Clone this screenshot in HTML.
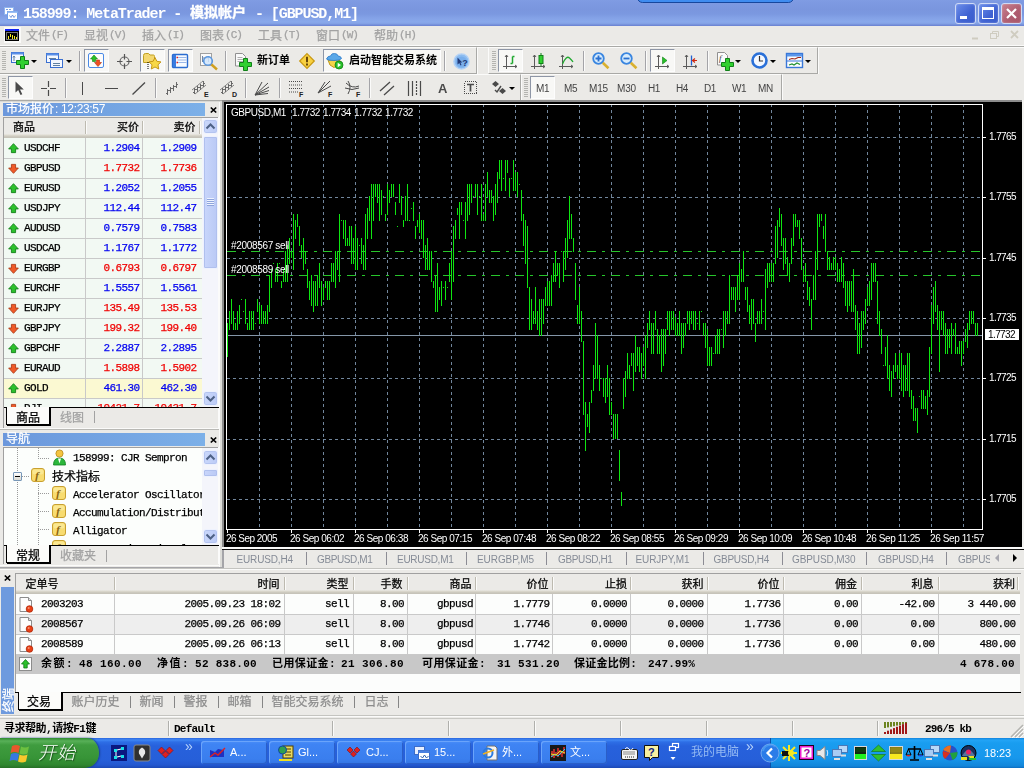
<!DOCTYPE html><html lang="zh"><head><meta charset="utf-8"><title>158999: MetaTrader</title><style>
*{margin:0;padding:0;box-sizing:border-box}
html,body{width:1024px;height:768px;overflow:hidden;background:#ebeae7}
body{position:relative;font-family:"Liberation Sans","Noto Sans CJK SC",sans-serif;font-size:12px;color:#000}
.a{position:absolute}
.t{position:absolute;white-space:pre;line-height:1;display:block;will-change:opacity}
.th{font-family:"Liberation Sans","Noto Sans CJK SC",sans-serif;font-size:10px}
.ss{font-family:"Liberation Mono","Noto Sans CJK SC",monospace;font-size:11px}
.sb{font-family:"Liberation Mono","Noto Sans CJK SC",monospace;font-size:11px;font-weight:bold}
.cj{font-family:"Liberation Sans","Noto Sans CJK SC",sans-serif;font-size:12px}
.ss,.cj{-webkit-text-stroke:.25px currentColor}
.w{color:#fff}
.g{color:#a2a2a2}
.bl{color:#0000f0}
.rd{color:#f00000}
svg{position:absolute;overflow:visible}
</style></head><body>
<div class="a" style="left:0px;top:0px;width:1024px;height:26px;background:linear-gradient(#809ce3 0,#7d99e1 3px,#7a96de 9px,#7b98e0 14px,#84a2e7 18px,#89a9eb 22px,#819fe3 24px,#7089d6 25px,#6c84d2 26px)"></div>
<div class="a" style="left:637px;top:-8px;width:157px;height:11px;background:#3f8cf0;border:1px solid #17479d;border-radius:6px"></div>
<svg style="left:4px;top:7px" width="15" height="13" viewBox="0 0 15 13"><rect x=".5" y=".5" width="9" height="7" fill="#fdfeff" stroke="#8fb4ee"/><path d="M2 2.500h2M5 2.500h2" stroke="#7aa0e0"/><rect x="3.500" y="4.500" width="10" height="8" fill="#fff" stroke="#6f9fe8"/><rect x="3.500" y="4.500" width="10" height="1.500" fill="#9cc0f4"/><path d="M5.500 8.500l1.500 2 1.500-2.500 1.500 2.500 1.500-2" fill="none" stroke="#5580d0" stroke-width=".8"/></svg>
<span id="t1" class="t w" style="left:23px;top:7px;letter-spacing:-1.097px;font:bold 15px/1 'Liberation Mono',monospace">158999: MetaTrader - </span>
<span id="t2" class="t w" style="left:190px;top:6px;letter-spacing:0.000px;font:bold 14px/1 'Liberation Mono','Noto Sans CJK SC',sans-serif;-webkit-text-stroke:.35px #fff">模拟帐户</span>
<span id="t3" class="t w" style="left:247px;top:7px;letter-spacing:-1.074px;font:bold 15px/1 'Liberation Mono',monospace"> - [GBPUSD,M1]</span>
<div class="a" style="left:955px;top:3px;width:21px;height:21px;background:linear-gradient(135deg,#6c8eea,#3f62d2 60%,#3a5ccc);border:1px solid #cfdaf6;border-radius:3px;box-shadow:inset 0 0 2px rgba(255,255,255,.4)"><div class="a" style="left:4px;top:12px;width:7px;height:3px;background:#fff"></div></div>
<div class="a" style="left:978px;top:3px;width:21px;height:21px;background:linear-gradient(135deg,#6c8eea,#3f62d2 60%,#3a5ccc);border:1px solid #cfdaf6;border-radius:3px;box-shadow:inset 0 0 2px rgba(255,255,255,.4)"><div class="a" style="left:3px;top:3px;width:12px;height:12px;border:1px solid #fff;border-top:3px solid #fff"></div></div>
<div class="a" style="left:1001px;top:3px;width:21px;height:21px;background:linear-gradient(135deg,#c8808e,#ae5c70 60%,#a8566a);border:1px solid #cfdaf6;border-radius:3px;box-shadow:inset 0 0 2px rgba(255,255,255,.4)"><svg style="left:3px;top:3px" width="13" height="13" viewBox="0 0 13 13"><path d="M2 2l9 9M11 2l-9 9" stroke="#fff" stroke-width="2.2" fill="none"/></svg></div>
<div class="a" style="left:4px;top:27px;width:17px;height:16px;background:#fafaf8"></div>
<svg style="left:5px;top:29px" width="14" height="12" viewBox="0 0 14 12" shape-rendering="crispEdges"><rect width="14" height="12" fill="#000"/><rect width="14" height="2" fill="#1020f0"/><rect x="1.500" y="3.500" width="11" height="7" fill="none" stroke="#777"/><path d="M3.500 7v3M5.500 5v3M7.500 6v3.500M9.500 7v3M11.500 8v2" stroke="#f4ec20" stroke-width="1"/></svg>
<span id="t4" class="t cj g" style="left:26px;top:30px;">文件</span>
<span id="t5" class="t ss g" style="left:51px;top:30px;letter-spacing:-0.938px;">(F)</span>
<span id="t6" class="t cj g" style="left:84px;top:30px;">显视</span>
<span id="t7" class="t ss g" style="left:109px;top:30px;letter-spacing:-0.938px;">(V)</span>
<span id="t8" class="t cj g" style="left:142px;top:30px;">插入</span>
<span id="t9" class="t ss g" style="left:167px;top:30px;letter-spacing:-0.938px;">(I)</span>
<span id="t10" class="t cj g" style="left:200px;top:30px;">图表</span>
<span id="t11" class="t ss g" style="left:225px;top:30px;letter-spacing:-0.938px;">(C)</span>
<span id="t12" class="t cj g" style="left:258px;top:30px;">工具</span>
<span id="t13" class="t ss g" style="left:283px;top:30px;letter-spacing:-0.938px;">(T)</span>
<span id="t14" class="t cj g" style="left:316px;top:30px;">窗口</span>
<span id="t15" class="t ss g" style="left:341px;top:30px;letter-spacing:-0.938px;">(W)</span>
<span id="t16" class="t cj g" style="left:374px;top:30px;">帮助</span>
<span id="t17" class="t ss g" style="left:399px;top:30px;letter-spacing:-0.938px;">(H)</span>
<svg style="left:968px;top:28px" width="54" height="14" viewBox="0 0 54 14"><g stroke="#cfccc0" fill="none"><path d="M4 10.5h6" stroke-width="2"/><rect x="22.5" y="5.500" width="6" height="5"/><path d="M24.5 5V3.500h6v5H29" /><path d="M43 3l7 7M50 3l-7 7" stroke-width="1.8"/></g></svg>
<div class="a" style="left:0px;top:45px;width:1024px;height:1px;background:#fbfbfa"></div>
<div class="a" style="left:0px;top:46px;width:1024px;height:1px;background:#a9a9a6"></div>
<div class="a" style="left:0px;top:47px;width:1024px;height:1px;background:#fbfbfa"></div>
<div class="a" style="left:-2px;top:47px;width:479px;height:27px;border:1px solid;border-color:#fbfbfa #a9a9a6 #a9a9a6 #fbfbfa"></div>
<div class="a" style="left:477px;top:47px;width:1px;height:27px;background:#fbfbfa"></div>
<div class="a" style="left:2px;top:51px;width:4px;height:19px;background:repeating-linear-gradient(#b4b4b0 0,#b4b4b0 1px,transparent 1px,transparent 2px)"></div>
<div class="a" style="left:488px;top:47px;width:330px;height:27px;border:1px solid;border-color:#fbfbfa #a9a9a6 #a9a9a6 #fbfbfa"></div>
<div class="a" style="left:818px;top:47px;width:1px;height:27px;background:#fbfbfa"></div>
<div class="a" style="left:492px;top:51px;width:4px;height:19px;background:repeating-linear-gradient(#b4b4b0 0,#b4b4b0 1px,transparent 1px,transparent 2px)"></div>
<div class="a" style="left:520px;top:74px;width:262px;height:27px;border:1px solid;border-color:#fbfbfa #a9a9a6 #a9a9a6 #fbfbfa"></div>
<div class="a" style="left:782px;top:74px;width:1px;height:27px;background:#fbfbfa"></div>
<div class="a" style="left:524px;top:78px;width:4px;height:19px;background:repeating-linear-gradient(#b4b4b0 0,#b4b4b0 1px,transparent 1px,transparent 2px)"></div>
<div class="a" style="left:-2px;top:74px;width:523px;height:27px;border:1px solid;border-color:#fbfbfa #a9a9a6 #a9a9a6 #fbfbfa"></div>
<div class="a" style="left:521px;top:74px;width:1px;height:27px;background:#fbfbfa"></div>
<div class="a" style="left:2px;top:78px;width:4px;height:19px;background:repeating-linear-gradient(#b4b4b0 0,#b4b4b0 1px,transparent 1px,transparent 2px)"></div>
<div class="a" style="left:0px;top:101px;width:1024px;height:1px;background:#d8d8d4"></div>
<svg style="left:11px;top:52px" width="18" height="17" viewBox="0 0 18 17"><rect x=".5" y=".5" width="12" height="10" fill="#f4f8ff" stroke="#3a6fd0"/><rect x=".5" y=".5" width="12" height="2" fill="#5a90e8"/><path d="M3 4v5M2 5.500l1-1.500 1 1.500" stroke="#6080a0" fill="none"/><path d="M5.5 8.5h4v-4h4v4h4v4h-4v4h-4v-4h-4z" fill="#30d030" stroke="#108018" stroke-width="1"/></svg>
<svg style="left:31px;top:60px" width="6" height="3" viewBox="0 0 6 3"><path d="M0 0h6L3 3z" fill="#000"/></svg>
<svg style="left:46px;top:53px" width="18" height="16" viewBox="0 0 18 16"><rect x=".5" y=".5" width="12" height="9" fill="#f4f8ff" stroke="#3a6fd0"/><rect x=".5" y=".5" width="12" height="2" fill="#5a90e8"/><path d="M3 5.500h7" stroke="#6080a0"/><rect x="4.500" y="6.500" width="12" height="8" fill="#f4f8ff" stroke="#3a6fd0"/><path d="M7 10.500h7M7 12.500h7" stroke="#6080a0"/></svg>
<svg style="left:66px;top:60px" width="6" height="3" viewBox="0 0 6 3"><path d="M0 0h6L3 3z" fill="#000"/></svg>
<div class="a" style="left:79px;top:51px;width:1px;height:20px;background:#a4a4a8"></div>
<div class="a" style="left:80px;top:51px;width:1px;height:20px;background:#fbfbfa"></div>
<div class="a" style="left:84px;top:49px;width:25px;height:23px;background:#f8f8f6;border:1px solid;border-color:#8e96a6 #fdfdfd #fdfdfd #8e96a6"></div>
<svg style="left:88px;top:53px" width="17" height="16" viewBox="0 0 17 16"><rect x=".5" y=".5" width="15" height="14" rx="1.500" fill="#fdfdfd" stroke="#4a8ae6"/><path d="M6 2l3.500 4h-2v2.500h-3V6h-2z" fill="#28c028" stroke="#108010" stroke-width=".6"/><path d="M10 13.500l-3.500-4h2V7h3v2.500h2z" fill="#f05020" stroke="#b03010" stroke-width=".6"/></svg>
<svg style="left:117px;top:54px" width="15" height="15" viewBox="0 0 15 15"><circle cx="7.500" cy="7.500" r="4.500" fill="none" stroke="#666" stroke-width="1.200"/><path d="M7.500 0v5.500M7.500 9.500v5.500M0 7.500h5.500M9.500 7.500h5.500" stroke="#555" stroke-width="1.200"/></svg>
<div class="a" style="left:140px;top:49px;width:25px;height:23px;background:#f8f8f6;border:1px solid;border-color:#8e96a6 #fdfdfd #fdfdfd #8e96a6"></div>
<svg style="left:143px;top:52px" width="19" height="18" viewBox="0 0 19 18"><path d="M.5 3.500q0-2 2-2h3l1.500 1.500h3.500q1 0 1 1.500v6h-11z" fill="#f4d870" stroke="#c0a020"/><path d="M5 10v7" stroke="#000" stroke-dasharray="1 1"/><path d="M12 5.500l1.900 3.800 4.100.6-3 2.900.7 4.200-3.700-2-3.700 2 .7-4.200-3-2.900 4.100-.6z" fill="#f8d848" stroke="#c09010" stroke-width=".9"/></svg>
<div class="a" style="left:168px;top:49px;width:25px;height:23px;background:#f8f8f6;border:1px solid;border-color:#8e96a6 #fdfdfd #fdfdfd #8e96a6"></div>
<svg style="left:172px;top:54px" width="17" height="14" viewBox="0 0 17 14"><rect x=".5" y=".5" width="15" height="13" rx="1" fill="#f8fbff" stroke="#2a6cd0" stroke-width="1.400"/><rect x="1" y="1" width="3" height="12" fill="#3a7ce0"/><path d="M5.500 3.500h9M5.500 6h9M5.500 8.500h9" stroke="#9ab8e8"/><path d="M4.500 3.500h1.500M4.500 8.500h1.500" stroke="#e02020" stroke-width="1.400"/></svg>
<svg style="left:200px;top:53px" width="19" height="18" viewBox="0 0 19 18"><rect x=".5" y=".5" width="11" height="12" fill="#fafafa" stroke="#a0a0a0"/><path d="M2.500 3v6M8.500 3v6M2.500 5h6" stroke="#7088a8"/><circle cx="8" cy="8" r="4.300" fill="#cfe4fa" fill-opacity=".85" stroke="#5a96de" stroke-width="1.600"/><path d="M11.500 11.500l5.500 5" stroke="#d0a020" stroke-width="2.400"/></svg>
<div class="a" style="left:225px;top:51px;width:1px;height:20px;background:#a4a4a8"></div>
<div class="a" style="left:226px;top:51px;width:1px;height:20px;background:#fbfbfa"></div>
<svg style="left:235px;top:53px" width="18" height="18" viewBox="0 0 18 18"><path d="M.5.500h7l3 3v9.500h-10z" fill="#fafafa" stroke="#909090"/><path d="M2.500 4.500h5M2.500 6.500h6M2.500 8.500h6" stroke="#b0b0b0"/><path d="M4.5 9.5h4v-4h4v4h4v4h-4v4h-4v-4h-4z" fill="#30d030" stroke="#108018" stroke-width="1"/></svg>
<span id="t18" class="t th" style="left:257px;top:55px;letter-spacing:0.000px;font-weight:bold;font-size:11px">新订单</span>
<svg style="left:299px;top:53px" width="16" height="16" viewBox="0 0 16 16"><path d="M8 .7l7.300 7.300-7.300 7.300-7.300-7.300z" fill="#f8d040" stroke="#c89810" stroke-width="1.200"/><path d="M8 3.800v5.400M8 10.600v1.800" stroke="#503000" stroke-width="1.700"/></svg>
<div class="a" style="left:323px;top:49px;width:118px;height:23px;background:#f8f8f6;border:1px solid;border-color:#8e96a6 #fdfdfd #fdfdfd #8e96a6"></div>
<svg style="left:326px;top:52px" width="18" height="18" viewBox="0 0 18 18"><path d="M2 8h12l-2 5-4 2.500-4-2.500z" fill="#f4d448" stroke="#c09818"/><path d="M.5 7q1-3 4-3 1-3 4-2.500 3 0 3.500 2.500 3 0 3.500 2.500-1 2-7.500 2t-7.500-1.500z" fill="#5aa8e8" stroke="#2a78c8" stroke-width=".8"/><circle cx="13" cy="13" r="4" fill="#28c028" stroke="#108010" stroke-width=".8"/><path d="M11.700 10.800l3.300 2.200-3.300 2.200z" fill="#fff"/></svg>
<span id="t19" class="t th" style="left:349px;top:55px;letter-spacing:0.000px;font-weight:bold;font-size:11px">启动智能交易系统</span>
<div class="a" style="left:444px;top:51px;width:1px;height:20px;background:#a4a4a8"></div>
<div class="a" style="left:445px;top:51px;width:1px;height:20px;background:#fbfbfa"></div>
<svg style="left:453px;top:53px" width="17" height="17" viewBox="0 0 17 17"><circle cx="8.500" cy="8.500" r="7.600" fill="#8cbcf0" stroke="#b4d2f6" stroke-width="1.400"/><circle cx="8.500" cy="9" r="5.500" fill="#78aeec"/><path d="M4.500 4.500v7l1.800-1.500 1.200 2.500 1-.5-1.200-2.500h2z" fill="#223a78"/><text x="9.300" y="12.500" font-family="Liberation Sans,sans-serif" font-weight="bold" font-size="9" fill="#223a78">?</text></svg>
<div class="a" style="left:498px;top:49px;width:25px;height:23px;background:#f8f8f6;border:1px solid;border-color:#8e96a6 #fdfdfd #fdfdfd #8e96a6"></div>
<svg style="left:503px;top:54px" width="16" height="16" viewBox="0 0 16 16"><path d="M3.500 1v14M0 12.500h14M2 3l1.500-2 1.500 2M12 11l2 1.500-2 1.500" fill="none" stroke="#5a5a5a" stroke-width="1"/><path d="M9.500 2.500v7M9.500 2.500h2M7.500 9.500h2" stroke="#20a830" stroke-width="1.500" fill="none"/></svg>
<svg style="left:531px;top:53px" width="16" height="17" viewBox="0 0 16 17"><g transform="translate(0,1)"><path d="M3.500 1v14M0 12.500h14M2 3l1.500-2 1.500 2M12 11l2 1.500-2 1.500" fill="none" stroke="#5a5a5a" stroke-width="1"/></g><path d="M10 0v13" stroke="#108018"/><rect x="8" y="2.500" width="4" height="8" fill="#30d030" stroke="#108018"/></svg>
<svg style="left:559px;top:54px" width="16" height="16" viewBox="0 0 16 16"><path d="M3.500 1v14M0 12.500h14M2 3l1.500-2 1.500 2M12 11l2 1.500-2 1.500" fill="none" stroke="#5a5a5a" stroke-width="1"/><path d="M3.500 10q4-9 7-6t3.500 4" stroke="#20a830" stroke-width="1.300" fill="none"/></svg>
<div class="a" style="left:583px;top:51px;width:1px;height:20px;background:#a4a4a8"></div>
<div class="a" style="left:584px;top:51px;width:1px;height:20px;background:#fbfbfa"></div>
<svg style="left:592px;top:52px" width="18" height="18" viewBox="0 0 18 18"><circle cx="6.500" cy="6.500" r="5.300" fill="#d8ecfc" stroke="#3a86e0" stroke-width="1.800"/><path d="M10.800 10.800l5.700 5.400" stroke="#d8b030" stroke-width="2.600"/><path d="M3.500 6.500h6M6.500 3.500v6" stroke="#2a70d0" stroke-width="1.800"/></svg>
<svg style="left:620px;top:52px" width="18" height="18" viewBox="0 0 18 18"><circle cx="6.500" cy="6.500" r="5.300" fill="#d8ecfc" stroke="#3a86e0" stroke-width="1.800"/><path d="M10.800 10.800l5.700 5.400" stroke="#d8b030" stroke-width="2.600"/><path d="M3.500 6.500h6" stroke="#2a70d0" stroke-width="1.800"/></svg>
<div class="a" style="left:645px;top:51px;width:1px;height:20px;background:#a4a4a8"></div>
<div class="a" style="left:646px;top:51px;width:1px;height:20px;background:#fbfbfa"></div>
<div class="a" style="left:650px;top:49px;width:25px;height:23px;background:#f8f8f6;border:1px solid;border-color:#8e96a6 #fdfdfd #fdfdfd #8e96a6"></div>
<svg style="left:655px;top:54px" width="16" height="16" viewBox="0 0 16 16"><path d="M3.500 1v14M0 12.500h14M2 3l1.500-2 1.500 2M12 11l2 1.500-2 1.500" fill="none" stroke="#5a5a5a" stroke-width="1"/><path d="M7.500 3l4.500 3.500-4.500 3.500z" fill="#28c028" stroke="#108018" stroke-width=".6"/></svg>
<svg style="left:683px;top:54px" width="16" height="16" viewBox="0 0 16 16"><path d="M3.500 1v14M0 12.500h14M2 3l1.500-2 1.500 2M12 11l2 1.500-2 1.500" fill="none" stroke="#5a5a5a" stroke-width="1"/><path d="M8.500 1.500v10" stroke="#2060d0" stroke-width="1.300"/><path d="M14 6.500h-4.500M12 4.500l-2.500 2 2.500 2" stroke="#d02810" stroke-width="1.200" fill="none"/></svg>
<div class="a" style="left:707px;top:51px;width:1px;height:20px;background:#a4a4a8"></div>
<div class="a" style="left:708px;top:51px;width:1px;height:20px;background:#fbfbfa"></div>
<svg style="left:717px;top:52px" width="18" height="19" viewBox="0 0 18 19"><path d="M.5.500h7l3 3v9.500h-10z" fill="#fafafa" stroke="#909090"/><text x="2" y="9" font-family="Liberation Serif,serif" font-style="italic" font-size="9" fill="#444">f</text><path d="M4.5 10.5h4v-4h4v4h4v4h-4v4h-4v-4h-4z" fill="#30d030" stroke="#108018" stroke-width="1"/></svg>
<svg style="left:735px;top:60px" width="6" height="3" viewBox="0 0 6 3"><path d="M0 0h6L3 3z" fill="#000"/></svg>
<svg style="left:751px;top:52px" width="17" height="17" viewBox="0 0 17 17"><circle cx="8.500" cy="8.500" r="7" fill="#f4f8ff" stroke="#2a70d8" stroke-width="2.600"/><path d="M8.500 4v5h3.500" stroke="#333" stroke-width="1.200" fill="none"/></svg>
<svg style="left:770px;top:60px" width="6" height="3" viewBox="0 0 6 3"><path d="M0 0h6L3 3z" fill="#000"/></svg>
<svg style="left:786px;top:53px" width="17" height="15" viewBox="0 0 17 15"><rect x=".5" y=".5" width="16" height="14" fill="#fafcff" stroke="#3a78d8" stroke-width="1.400"/><rect x="1" y="1" width="15" height="2.500" fill="#5a96ea"/><path d="M1 8h15" stroke="#3a78d8"/><path d="M3 6.500l3-1 3 .5 3-1.500 3 0" stroke="#a02818" fill="none" stroke-width="1.200"/><path d="M3 12l3-1 2 1 3-2 3 1.500" stroke="#209030" fill="none" stroke-width="1.200"/></svg>
<svg style="left:805px;top:60px" width="6" height="3" viewBox="0 0 6 3"><path d="M0 0h6L3 3z" fill="#000"/></svg>
<div class="a" style="left:8px;top:76px;width:25px;height:23px;background:#f8f8f6;border:1px solid;border-color:#8e96a6 #fdfdfd #fdfdfd #8e96a6"></div>
<svg style="left:15px;top:81px" width="10" height="15" viewBox="0 0 10 15"><path d="M.5.500v11l2.700-2.500 2.300 5 1.800-.8-2.300-4.800h3.800z" fill="#4a4a4a"/></svg>
<svg style="left:41px;top:81px" width="15" height="15" viewBox="0 0 15 15"><path d="M7.500 0v15M0 7.500h15" stroke="#4a4a4a" stroke-width="1.200"/><rect x="6" y="6" width="3" height="3" fill="#ebeae7"/></svg>
<div class="a" style="left:65px;top:78px;width:1px;height:20px;background:#a4a4a8"></div>
<div class="a" style="left:66px;top:78px;width:1px;height:20px;background:#fbfbfa"></div>
<div class="a" style="left:82px;top:82px;width:1px;height:13px;background:#4a4a4a"></div>
<div class="a" style="left:105px;top:88px;width:13px;height:1px;background:#4a4a4a"></div>
<svg style="left:132px;top:82px" width="14" height="13" viewBox="0 0 14 13"><path d="M.5 12.500L13 .5" stroke="#4a4a4a" stroke-width="1.300"/></svg>
<div class="a" style="left:155px;top:78px;width:1px;height:20px;background:#a4a4a8"></div>
<div class="a" style="left:156px;top:78px;width:1px;height:20px;background:#fbfbfa"></div>
<svg style="left:165px;top:81px" width="14" height="14" viewBox="0 0 14 14"><path d="M2.500 8v6M5.500 6v6M8.500 4v6M11.500 1v6M1 12.500h1.500M2.500 9.500h3M5.500 7.500h3M8.500 5.500h3M11.500 3.500h1.500" stroke="#5c5c5c" stroke-width=".9" fill="none"/></svg>
<svg style="left:192px;top:80px" width="17" height="17" viewBox="0 0 17 17"><path d="M2.500 8v6M5.500 6v6M8.500 4v6M11.500 1v6M1 12.500h1.500M2.500 9.500h3M5.500 7.500h3M8.500 5.500h3M11.500 3.500h1.500" stroke="#5c5c5c" stroke-width=".9" fill="none"/><path d="M0 10L11 1M3 14L14 5" stroke="#6a6a6a" stroke-width=".8"/><text x="12" y="17" font-family="Liberation Sans,sans-serif" font-weight="bold" font-size="7" fill="#222">E</text></svg>
<svg style="left:220px;top:80px" width="17" height="17" viewBox="0 0 17 17"><path d="M2.500 8v6M5.500 6v6M8.500 4v6M11.500 1v6M1 12.500h1.500M2.500 9.500h3M5.500 7.500h3M8.500 5.500h3M11.500 3.500h1.500" stroke="#5c5c5c" stroke-width=".9" fill="none"/><path d="M0 10L11 1M3 14L14 5" stroke="#6a6a6a" stroke-width=".8"/><text x="12" y="17" font-family="Liberation Sans,sans-serif" font-weight="bold" font-size="7" fill="#222">D</text></svg>
<div class="a" style="left:245px;top:78px;width:1px;height:20px;background:#a4a4a8"></div>
<div class="a" style="left:246px;top:78px;width:1px;height:20px;background:#fbfbfa"></div>
<svg style="left:254px;top:82px" width="16" height="14" viewBox="0 0 16 14"><path d="M1 13L14 1M1 13L15 5M1 13L15 8.500M1 13L14 11.500M1 13L8 0" stroke="#4a4a4a" stroke-width="1" fill="none"/></svg>
<div class="a" style="left:279px;top:78px;width:1px;height:20px;background:#a4a4a8"></div>
<div class="a" style="left:280px;top:78px;width:1px;height:20px;background:#fbfbfa"></div>
<svg style="left:289px;top:80px" width="18" height="17" viewBox="0 0 18 17"><path d="M0 1.500h13M0 5h13M0 8.500h13M0 12h9" stroke="#4a4a4a" stroke-width="1.200" stroke-dasharray="1 1"/><text x="10" y="16.5" font-family="Liberation Sans,sans-serif" font-weight="bold" font-size="7" fill="#222">F</text></svg>
<svg style="left:317px;top:81px" width="18" height="16" viewBox="0 0 18 16"><path d="M1 12L13 0M1 12L14 5M1 12L8 1" stroke="#4a4a4a" stroke-width="1" fill="none"/><text x="11" y="15.5" font-family="Liberation Sans,sans-serif" font-weight="bold" font-size="7" fill="#222">F</text></svg>
<svg style="left:345px;top:81px" width="18" height="16" viewBox="0 0 18 16"><path d="M1 2q6 6 13 3M3 0q4 6 0 13M0 7q7 3 14 0" stroke="#4a4a4a" stroke-width="1" fill="none"/><text x="11" y="15.5" font-family="Liberation Sans,sans-serif" font-weight="bold" font-size="7" fill="#222">F</text></svg>
<div class="a" style="left:369px;top:78px;width:1px;height:20px;background:#a4a4a8"></div>
<div class="a" style="left:370px;top:78px;width:1px;height:20px;background:#fbfbfa"></div>
<svg style="left:380px;top:82px" width="14" height="13" viewBox="0 0 14 13"><path d="M0 9L10 0M4 13L14 4" stroke="#4a4a4a" stroke-width="1.300"/></svg>
<svg style="left:408px;top:81px" width="14" height="15" viewBox="0 0 14 15"><path d="M.5 0v15M4.500 0v15M12.500 0v15" stroke="#4a4a4a" stroke-width="1.200"/><path d="M8.500 0v15" stroke="#4a4a4a" stroke-width="1.200" stroke-dasharray="2 1"/></svg>
<span id="t20" class="t " style="left:438px;top:82px;font:bold 13px/1 'Liberation Sans',sans-serif;color:#4a4a4a">A</span>
<svg style="left:464px;top:81px" width="14" height="14" viewBox="0 0 14 14"><rect x=".5" y=".5" width="12" height="12" fill="none" stroke="#4a4a4a" stroke-dasharray="1 1" shape-rendering="crispEdges"/><path d="M3 3.500h7M6.500 3.500v7" stroke="#4a4a4a" stroke-width="1.700"/></svg>
<svg style="left:492px;top:81px" width="15" height="14" viewBox="0 0 15 14"><path d="M3.500 0l3.500 3-3.500 3-3.500-3zM10.500 7l3.500 3-3.500 3-3.500-3z" fill="#4a4a4a"/><path d="M3 9l2 2 4-6" stroke="#4a4a4a" stroke-width="1.400" fill="none"/></svg>
<svg style="left:509px;top:87px" width="6" height="3" viewBox="0 0 6 3"><path d="M0 0h6L3 3z" fill="#000"/></svg>
<div class="a" style="left:530px;top:76px;width:25px;height:23px;background:#f8f8f6;border:1px solid;border-color:#8e96a6 #fdfdfd #fdfdfd #8e96a6"></div>
<span id="t21" class="t th" style="left:536px;top:84px;letter-spacing:-0.453px;color:#444">M1</span>
<span id="t22" class="t th" style="left:564px;top:84px;letter-spacing:-0.453px;color:#444">M5</span>
<span id="t23" class="t th" style="left:589px;top:84px;letter-spacing:-0.151px;color:#444">M15</span>
<span id="t24" class="t th" style="left:617px;top:84px;letter-spacing:-0.151px;color:#444">M30</span>
<span id="t25" class="t th" style="left:648px;top:84px;letter-spacing:-0.398px;color:#444">H1</span>
<span id="t26" class="t th" style="left:676px;top:84px;letter-spacing:-0.398px;color:#444">H4</span>
<span id="t27" class="t th" style="left:704px;top:84px;letter-spacing:-0.398px;color:#444">D1</span>
<span id="t28" class="t th" style="left:732px;top:84px;letter-spacing:-0.500px;color:#444">W1</span>
<span id="t29" class="t th" style="left:758px;top:84px;letter-spacing:-0.281px;color:#444">MN</span>
<div class="a" style="left:0px;top:102px;width:219px;height:327px;background:#ebeae7"></div>
<div class="a" style="left:219px;top:102px;width:1px;height:466px;background:#fbfbfa"></div>
<div class="a" style="left:220px;top:102px;width:2px;height:466px;background:#dcdcd8"></div>
<div class="a" style="left:3px;top:103px;width:202px;height:13px;background:linear-gradient(90deg,#6b97dc,#7cb0e8)"></div>
<span id="t30" class="t cj w" style="left:6px;top:103px;">市场报价</span>
<span id="t31" class="t w" style="left:55px;top:103px;letter-spacing:-0.339px;font:12px/1 'Liberation Sans',sans-serif">: 12:23:57</span>
<svg style="left:210px;top:107px" width="7" height="6" viewBox="0 0 7 6"><path d="M.8.500l5.400 5M6.200.500l-5.400 5" stroke="#000" stroke-width="1.700"/></svg>
<div class="a" style="left:3px;top:117px;width:216px;height:1px;background:#a0a0a0"></div>
<div class="a" style="left:3px;top:117px;width:1px;height:311px;background:#a0a0a0"></div>
<div class="a" style="left:218px;top:117px;width:1px;height:311px;background:#fbfbfa"></div>
<div class="a" style="left:4px;top:118px;width:198px;height:20px;background:linear-gradient(#ebeae7 0,#ebeae7 16px,#dedbd0 17px,#d2cfc4 18px,#c6c3b9 19px)"></div>
<div class="a" style="left:85px;top:121px;width:1px;height:13px;background:#bdbab0"></div>
<div class="a" style="left:86px;top:121px;width:1px;height:13px;background:#fbfbfa"></div>
<div class="a" style="left:142px;top:121px;width:1px;height:13px;background:#bdbab0"></div>
<div class="a" style="left:143px;top:121px;width:1px;height:13px;background:#fbfbfa"></div>
<div class="a" style="left:199px;top:121px;width:1px;height:13px;background:#bdbab0"></div>
<div class="a" style="left:200px;top:121px;width:1px;height:13px;background:#fbfbfa"></div>
<span id="t32" class="t cj" style="left:13px;top:122px;font-size:11px">商品</span>
<span id="t33" class="t cj" style="left:117px;top:122px;font-size:11px">买价</span>
<span id="t34" class="t cj" style="left:173.5px;top:122px;font-size:11px">卖价</span>
<div class="a" style="left:4px;top:138px;width:198px;height:269px;overflow:hidden;background:#f2f9f3">
<div class="a" style="left:0px;top:20px;width:198px;height:1px;background:#c9c9c9"></div>
<svg style="left:4px;top:5px" width="11" height="11" viewBox="0 0 12 12"><path d="M6 .7l5.300 5.800h-3v4h-4.600v-4h-3z" fill="#2cc02c" stroke="#0c7a14" stroke-width=".9"/></svg>
<span id="t35" class="t ss" style="left:20px;top:5px;letter-spacing:-0.602px;">USDCHF</span>
<span id="t36" class="t ss bl" style="left:99.5px;top:5px;letter-spacing:-0.602px;">1.2904</span>
<span id="t37" class="t ss bl" style="left:156.5px;top:5px;letter-spacing:-0.602px;">1.2909</span>
<div class="a" style="left:0px;top:40px;width:198px;height:1px;background:#c9c9c9"></div>
<svg style="left:4px;top:25px" width="11" height="11" viewBox="0 0 12 12"><path d="M6 11.300l5.300-5.800h-3v-4h-4.600v4h-3z" fill="#f05a28" stroke="#a83410" stroke-width=".9"/></svg>
<span id="t38" class="t ss" style="left:20px;top:25px;letter-spacing:-0.602px;">GBPUSD</span>
<span id="t39" class="t ss rd" style="left:99.5px;top:25px;letter-spacing:-0.602px;">1.7732</span>
<span id="t40" class="t ss rd" style="left:156.5px;top:25px;letter-spacing:-0.602px;">1.7736</span>
<div class="a" style="left:0px;top:60px;width:198px;height:1px;background:#c9c9c9"></div>
<svg style="left:4px;top:45px" width="11" height="11" viewBox="0 0 12 12"><path d="M6 .7l5.300 5.800h-3v4h-4.600v-4h-3z" fill="#2cc02c" stroke="#0c7a14" stroke-width=".9"/></svg>
<span id="t41" class="t ss" style="left:20px;top:45px;letter-spacing:-0.602px;">EURUSD</span>
<span id="t42" class="t ss bl" style="left:99.5px;top:45px;letter-spacing:-0.602px;">1.2052</span>
<span id="t43" class="t ss bl" style="left:156.5px;top:45px;letter-spacing:-0.602px;">1.2055</span>
<div class="a" style="left:0px;top:80px;width:198px;height:1px;background:#c9c9c9"></div>
<svg style="left:4px;top:65px" width="11" height="11" viewBox="0 0 12 12"><path d="M6 .7l5.300 5.800h-3v4h-4.600v-4h-3z" fill="#2cc02c" stroke="#0c7a14" stroke-width=".9"/></svg>
<span id="t44" class="t ss" style="left:20px;top:65px;letter-spacing:-0.602px;">USDJPY</span>
<span id="t45" class="t ss bl" style="left:99.5px;top:65px;letter-spacing:-0.602px;">112.44</span>
<span id="t46" class="t ss bl" style="left:156.5px;top:65px;letter-spacing:-0.602px;">112.47</span>
<div class="a" style="left:0px;top:100px;width:198px;height:1px;background:#c9c9c9"></div>
<svg style="left:4px;top:85px" width="11" height="11" viewBox="0 0 12 12"><path d="M6 .7l5.300 5.800h-3v4h-4.600v-4h-3z" fill="#2cc02c" stroke="#0c7a14" stroke-width=".9"/></svg>
<span id="t47" class="t ss" style="left:20px;top:85px;letter-spacing:-0.602px;">AUDUSD</span>
<span id="t48" class="t ss bl" style="left:99.5px;top:85px;letter-spacing:-0.602px;">0.7579</span>
<span id="t49" class="t ss bl" style="left:156.5px;top:85px;letter-spacing:-0.602px;">0.7583</span>
<div class="a" style="left:0px;top:120px;width:198px;height:1px;background:#c9c9c9"></div>
<svg style="left:4px;top:105px" width="11" height="11" viewBox="0 0 12 12"><path d="M6 .7l5.300 5.800h-3v4h-4.600v-4h-3z" fill="#2cc02c" stroke="#0c7a14" stroke-width=".9"/></svg>
<span id="t50" class="t ss" style="left:20px;top:105px;letter-spacing:-0.602px;">USDCAD</span>
<span id="t51" class="t ss bl" style="left:99.5px;top:105px;letter-spacing:-0.602px;">1.1767</span>
<span id="t52" class="t ss bl" style="left:156.5px;top:105px;letter-spacing:-0.602px;">1.1772</span>
<div class="a" style="left:0px;top:140px;width:198px;height:1px;background:#c9c9c9"></div>
<svg style="left:4px;top:125px" width="11" height="11" viewBox="0 0 12 12"><path d="M6 11.300l5.300-5.800h-3v-4h-4.600v4h-3z" fill="#f05a28" stroke="#a83410" stroke-width=".9"/></svg>
<span id="t53" class="t ss" style="left:20px;top:125px;letter-spacing:-0.602px;">EURGBP</span>
<span id="t54" class="t ss rd" style="left:99.5px;top:125px;letter-spacing:-0.602px;">0.6793</span>
<span id="t55" class="t ss rd" style="left:156.5px;top:125px;letter-spacing:-0.602px;">0.6797</span>
<div class="a" style="left:0px;top:160px;width:198px;height:1px;background:#c9c9c9"></div>
<svg style="left:4px;top:145px" width="11" height="11" viewBox="0 0 12 12"><path d="M6 .7l5.300 5.800h-3v4h-4.600v-4h-3z" fill="#2cc02c" stroke="#0c7a14" stroke-width=".9"/></svg>
<span id="t56" class="t ss" style="left:20px;top:145px;letter-spacing:-0.602px;">EURCHF</span>
<span id="t57" class="t ss bl" style="left:99.5px;top:145px;letter-spacing:-0.602px;">1.5557</span>
<span id="t58" class="t ss bl" style="left:156.5px;top:145px;letter-spacing:-0.602px;">1.5561</span>
<div class="a" style="left:0px;top:180px;width:198px;height:1px;background:#c9c9c9"></div>
<svg style="left:4px;top:165px" width="11" height="11" viewBox="0 0 12 12"><path d="M6 11.300l5.300-5.800h-3v-4h-4.600v4h-3z" fill="#f05a28" stroke="#a83410" stroke-width=".9"/></svg>
<span id="t59" class="t ss" style="left:20px;top:165px;letter-spacing:-0.602px;">EURJPY</span>
<span id="t60" class="t ss rd" style="left:99.5px;top:165px;letter-spacing:-0.602px;">135.49</span>
<span id="t61" class="t ss rd" style="left:156.5px;top:165px;letter-spacing:-0.602px;">135.53</span>
<div class="a" style="left:0px;top:200px;width:198px;height:1px;background:#c9c9c9"></div>
<svg style="left:4px;top:185px" width="11" height="11" viewBox="0 0 12 12"><path d="M6 11.300l5.300-5.800h-3v-4h-4.600v4h-3z" fill="#f05a28" stroke="#a83410" stroke-width=".9"/></svg>
<span id="t62" class="t ss" style="left:20px;top:185px;letter-spacing:-0.602px;">GBPJPY</span>
<span id="t63" class="t ss rd" style="left:99.5px;top:185px;letter-spacing:-0.602px;">199.32</span>
<span id="t64" class="t ss rd" style="left:156.5px;top:185px;letter-spacing:-0.602px;">199.40</span>
<div class="a" style="left:0px;top:220px;width:198px;height:1px;background:#c9c9c9"></div>
<svg style="left:4px;top:205px" width="11" height="11" viewBox="0 0 12 12"><path d="M6 .7l5.300 5.800h-3v4h-4.600v-4h-3z" fill="#2cc02c" stroke="#0c7a14" stroke-width=".9"/></svg>
<span id="t65" class="t ss" style="left:20px;top:205px;letter-spacing:-0.602px;">GBPCHF</span>
<span id="t66" class="t ss bl" style="left:99.5px;top:205px;letter-spacing:-0.602px;">2.2887</span>
<span id="t67" class="t ss bl" style="left:156.5px;top:205px;letter-spacing:-0.602px;">2.2895</span>
<div class="a" style="left:0px;top:240px;width:198px;height:1px;background:#c9c9c9"></div>
<svg style="left:4px;top:225px" width="11" height="11" viewBox="0 0 12 12"><path d="M6 11.300l5.300-5.800h-3v-4h-4.600v4h-3z" fill="#f05a28" stroke="#a83410" stroke-width=".9"/></svg>
<span id="t68" class="t ss" style="left:20px;top:225px;letter-spacing:-0.602px;">EURAUD</span>
<span id="t69" class="t ss rd" style="left:99.5px;top:225px;letter-spacing:-0.602px;">1.5898</span>
<span id="t70" class="t ss rd" style="left:156.5px;top:225px;letter-spacing:-0.602px;">1.5902</span>
<div class="a" style="left:0px;top:241px;width:198px;height:19px;background:#fbf9d2"></div>
<div class="a" style="left:0px;top:260px;width:198px;height:1px;background:#c9c9c9"></div>
<svg style="left:4px;top:245px" width="11" height="11" viewBox="0 0 12 12"><path d="M6 .7l5.300 5.800h-3v4h-4.600v-4h-3z" fill="#2cc02c" stroke="#0c7a14" stroke-width=".9"/></svg>
<span id="t71" class="t ss" style="left:20px;top:245px;letter-spacing:-0.602px;">GOLD</span>
<span id="t72" class="t ss bl" style="left:99.5px;top:245px;letter-spacing:-0.602px;">461.30</span>
<span id="t73" class="t ss bl" style="left:156.5px;top:245px;letter-spacing:-0.602px;">462.30</span>
<div class="a" style="left:0px;top:280px;width:198px;height:1px;background:#c9c9c9"></div>
<svg style="left:4px;top:265px" width="11" height="11" viewBox="0 0 12 12"><path d="M6 11.300l5.300-5.800h-3v-4h-4.600v4h-3z" fill="#f05a28" stroke="#a83410" stroke-width=".9"/></svg>
<span id="t74" class="t ss" style="left:20px;top:265px;letter-spacing:-0.604px;">DJI</span>
<span id="t75" class="t ss rd" style="left:93.5px;top:265px;letter-spacing:-0.603px;">10421.7</span>
<span id="t76" class="t ss rd" style="left:150.5px;top:265px;letter-spacing:-0.603px;">10431.7</span>
<div class="a" style="left:81px;top:0px;width:1px;height:269px;background:#c9c9c9"></div>
<div class="a" style="left:138px;top:0px;width:1px;height:269px;background:#c9c9c9"></div>
</div>
<div class="a" style="left:202px;top:118px;width:16px;height:289px;background:#f4f5fb"></div>
<div class="a" style="left:203px;top:119px;width:15px;height:15px;background:linear-gradient(90deg,#cad8fb,#bccbf6);border:1px solid #eef2fe;border-radius:3px;box-shadow:0 0 0 1px #b4c4f0 inset"></div>
<svg style="left:203px;top:119px" width="15" height="15" viewBox="0 0 15 15"><path d="M3.500 9.500l4-4 4 4" stroke="#4d6185" stroke-width="2" fill="none"/></svg>
<div class="a" style="left:203px;top:136px;width:15px;height:133px;background:linear-gradient(90deg,#c9d6fb,#bac9f5);border:1px solid #eef2fe;border-radius:2px;box-shadow:0 0 0 1px #b0c0ee inset"></div>
<svg style="left:207px;top:198px" width="7" height="8" viewBox="0 0 7 8"><path d="M0 .5h7M0 2.500h7M0 4.500h7M0 6.500h7" stroke="#eef3ff"/><path d="M0 1.500h7M0 3.500h7M0 5.500h7M0 7.500h7" stroke="#8ea4dc"/></svg>
<div class="a" style="left:203px;top:391px;width:15px;height:15px;background:linear-gradient(90deg,#cad8fb,#bccbf6);border:1px solid #eef2fe;border-radius:3px;box-shadow:0 0 0 1px #b4c4f0 inset"></div>
<svg style="left:203px;top:391px" width="15" height="15" viewBox="0 0 15 15"><path d="M3.500 5.500l4 4 4-4" stroke="#4d6185" stroke-width="2" fill="none"/></svg>
<div class="a" style="left:4px;top:407px;width:215px;height:1px;background:#000"></div>
<div class="a" style="left:6px;top:407px;width:44px;height:18px;background:#fcfcfa;border:1px solid #000;border-top:0;box-shadow:1px 1px 0 #000"></div>
<span id="t77" class="t cj" style="left:16px;top:412px;">商品</span>
<span id="t78" class="t cj g" style="left:60px;top:412px;">线图</span>
<div class="a" style="left:94px;top:411px;width:1px;height:12px;background:#a2a2a2"></div>
<div class="a" style="left:0px;top:428px;width:219px;height:1px;background:#fbfbfa"></div>
<div class="a" style="left:0px;top:429px;width:219px;height:1px;background:#b8b8b4"></div>
<div class="a" style="left:3px;top:433px;width:202px;height:13px;background:linear-gradient(90deg,#6b97dc,#7cb0e8)"></div>
<span id="t79" class="t cj w" style="left:6px;top:433px;">导航</span>
<svg style="left:210px;top:437px" width="7" height="6" viewBox="0 0 7 6"><path d="M.8.500l5.400 5M6.200.500l-5.400 5" stroke="#000" stroke-width="1.700"/></svg>
<div class="a" style="left:3px;top:447px;width:216px;height:1px;background:#a0a0a0"></div>
<div class="a" style="left:3px;top:447px;width:1px;height:117px;background:#a0a0a0"></div>
<div class="a" style="left:218px;top:447px;width:1px;height:117px;background:#fbfbfa"></div>
<div class="a" style="left:4px;top:448px;width:198px;height:97px;overflow:hidden;background:#fcfefc">
<div class="a" style="left:13px;top:0px;width:1px;height:97px;background:repeating-linear-gradient(180deg,#9a9a9a 0,#9a9a9a 1px,transparent 1px,transparent 2px)"></div>
<div class="a" style="left:34px;top:0px;width:1px;height:11px;background:repeating-linear-gradient(180deg,#9a9a9a 0,#9a9a9a 1px,transparent 1px,transparent 2px)"></div>
<div class="a" style="left:34px;top:10px;width:12px;height:1px;background:repeating-linear-gradient(90deg,#9a9a9a 0,#9a9a9a 1px,transparent 1px,transparent 2px)"></div>
<div class="a" style="left:34px;top:36px;width:1px;height:61px;background:repeating-linear-gradient(180deg,#9a9a9a 0,#9a9a9a 1px,transparent 1px,transparent 2px)"></div>
<div class="a" style="left:18px;top:28px;width:8px;height:1px;background:repeating-linear-gradient(90deg,#9a9a9a 0,#9a9a9a 1px,transparent 1px,transparent 2px)"></div>
<svg style="left:49px;top:1px" width="13" height="17" viewBox="0 0 13 17"><circle cx="6.500" cy="4.500" r="3.600" fill="#f4c440" stroke="#b88818" stroke-width=".8"/><path d="M.5 16q0-7 6-7t6 7z" fill="#2cb83c" stroke="#108020" stroke-width=".8"/><path d="M5 9.500l1.500 5 1.500-5z" fill="#fff"/></svg>
<span id="t80" class="t ss" style="left:69px;top:5px;letter-spacing:-0.601px;">158999: CJR Sempron</span>
<div class="a" style="left:9px;top:24px;width:9px;height:9px;background:linear-gradient(#fff,#d8d8d0);border:1px solid #7898b8;border-radius:1px"></div>
<div class="a" style="left:11px;top:28px;width:5px;height:1px;background:#000"></div>
<svg style="left:27px;top:20px" width="14" height="14" viewBox="0 0 14 14"><rect x=".5" y=".5" width="13" height="13" rx="2.500" fill="#f8dc70" stroke="#c8a030"/><rect x="1.500" y="1.500" width="11" height="5" rx="2" fill="#fcecA0" opacity=".7"/><text x="4.300" y="11" font-family="Liberation Serif,serif" font-style="italic" font-weight="bold" font-size="11" fill="#8a6410">f</text></svg>
<span id="t81" class="t cj" style="left:48px;top:23px;">技术指标</span>
<div class="a" style="left:34px;top:45px;width:12px;height:1px;background:repeating-linear-gradient(90deg,#9a9a9a 0,#9a9a9a 1px,transparent 1px,transparent 2px)"></div>
<svg style="left:48px;top:38px" width="14" height="14" viewBox="0 0 14 14"><rect x=".5" y=".5" width="13" height="13" rx="2.500" fill="#f8dc70" stroke="#c8a030"/><rect x="1.500" y="1.500" width="11" height="5" rx="2" fill="#fcecA0" opacity=".7"/><text x="4.300" y="11" font-family="Liberation Serif,serif" font-style="italic" font-weight="bold" font-size="11" fill="#8a6410">f</text></svg>
<span id="t82" class="t ss" style="left:69px;top:42px;letter-spacing:-0.602px;">Accelerator Oscillator</span>
<div class="a" style="left:34px;top:63px;width:12px;height:1px;background:repeating-linear-gradient(90deg,#9a9a9a 0,#9a9a9a 1px,transparent 1px,transparent 2px)"></div>
<svg style="left:48px;top:56px" width="14" height="14" viewBox="0 0 14 14"><rect x=".5" y=".5" width="13" height="13" rx="2.500" fill="#f8dc70" stroke="#c8a030"/><rect x="1.500" y="1.500" width="11" height="5" rx="2" fill="#fcecA0" opacity=".7"/><text x="4.300" y="11" font-family="Liberation Serif,serif" font-style="italic" font-weight="bold" font-size="11" fill="#8a6410">f</text></svg>
<span id="t83" class="t ss" style="left:69px;top:60px;letter-spacing:-0.601px;">Accumulation/Distribution</span>
<div class="a" style="left:34px;top:81px;width:12px;height:1px;background:repeating-linear-gradient(90deg,#9a9a9a 0,#9a9a9a 1px,transparent 1px,transparent 2px)"></div>
<svg style="left:48px;top:74px" width="14" height="14" viewBox="0 0 14 14"><rect x=".5" y=".5" width="13" height="13" rx="2.500" fill="#f8dc70" stroke="#c8a030"/><rect x="1.500" y="1.500" width="11" height="5" rx="2" fill="#fcecA0" opacity=".7"/><text x="4.300" y="11" font-family="Liberation Serif,serif" font-style="italic" font-weight="bold" font-size="11" fill="#8a6410">f</text></svg>
<span id="t84" class="t ss" style="left:69px;top:78px;letter-spacing:-0.602px;">Alligator</span>
<div class="a" style="left:34px;top:99px;width:12px;height:1px;background:repeating-linear-gradient(90deg,#9a9a9a 0,#9a9a9a 1px,transparent 1px,transparent 2px)"></div>
<svg style="left:48px;top:92px" width="14" height="14" viewBox="0 0 14 14"><rect x=".5" y=".5" width="13" height="13" rx="2.500" fill="#f8dc70" stroke="#c8a030"/><rect x="1.500" y="1.500" width="11" height="5" rx="2" fill="#fcecA0" opacity=".7"/><text x="4.300" y="11" font-family="Liberation Serif,serif" font-style="italic" font-weight="bold" font-size="11" fill="#8a6410">f</text></svg>
<span id="t85" class="t ss" style="left:69px;top:96px;letter-spacing:-0.602px;">Average Directional Movement</span>
</div>
<div class="a" style="left:202px;top:448px;width:16px;height:97px;background:#f4f5fb"></div>
<div class="a" style="left:203px;top:450px;width:15px;height:15px;background:linear-gradient(90deg,#cad8fb,#bccbf6);border:1px solid #eef2fe;border-radius:3px;box-shadow:0 0 0 1px #b4c4f0 inset"></div>
<svg style="left:203px;top:450px" width="15" height="15" viewBox="0 0 15 15"><path d="M3.500 9.500l4-4 4 4" stroke="#4d6185" stroke-width="2" fill="none"/></svg>
<div class="a" style="left:203px;top:469px;width:15px;height:8px;background:linear-gradient(90deg,#c9d6fb,#bac9f5);border:1px solid #eef2fe;border-radius:2px;box-shadow:0 0 0 1px #b0c0ee inset"></div>
<div class="a" style="left:203px;top:529px;width:15px;height:15px;background:linear-gradient(90deg,#cad8fb,#bccbf6);border:1px solid #eef2fe;border-radius:3px;box-shadow:0 0 0 1px #b4c4f0 inset"></div>
<svg style="left:203px;top:529px" width="15" height="15" viewBox="0 0 15 15"><path d="M3.500 5.500l4 4 4-4" stroke="#4d6185" stroke-width="2" fill="none"/></svg>
<div class="a" style="left:4px;top:545px;width:215px;height:1px;background:#000"></div>
<div class="a" style="left:6px;top:545px;width:44px;height:18px;background:#fcfcfa;border:1px solid #000;border-top:0;box-shadow:1px 1px 0 #000"></div>
<span id="t86" class="t cj" style="left:16px;top:550px;">常规</span>
<span id="t87" class="t cj g" style="left:60px;top:550px;">收藏夹</span>
<div class="a" style="left:106px;top:550px;width:1px;height:12px;background:#a2a2a2"></div>
<div class="a" style="left:0px;top:565px;width:220px;height:1px;background:#fbfbfa"></div>
<div class="a" style="left:0px;top:567px;width:224px;height:1px;background:#a4a4a8"></div>
<div class="a" style="left:222px;top:550px;width:2px;height:18px;background:#a4a4a8"></div>
<div class="a" style="left:0px;top:568px;width:1024px;height:1px;background:#c4c4c0"></div>
<div class="a" style="left:0px;top:569px;width:1024px;height:1px;background:#fbfbfa"></div>
<svg style="left:222px;top:100px" width="802" height="450" viewBox="222 100 802 450" shape-rendering="crispEdges"><rect x="222" y="100" width="802" height="2" fill="#8c8c8c"/><rect x="222" y="100" width="2" height="449" fill="#8c8c8c"/><rect x="224" y="102" width="798" height="445" fill="#000"/><rect x="1022" y="100" width="2" height="449" fill="#f4f4f2"/><rect x="222" y="547" width="802" height="2" fill="#fbfbfa"/><rect x="222" y="549" width="802" height="1" fill="#111"/><path d="M259.5 104V529M291.5 104V529M323.5 104V529M355.5 104V529M387.5 104V529M419.5 104V529M451.5 104V529M483.5 104V529M515.5 104V529M547.5 104V529M579.5 104V529M611.5 104V529M643.5 104V529M675.5 104V529M707.5 104V529M739.5 104V529M771.5 104V529M803.5 104V529M835.5 104V529M867.5 104V529M899.5 104V529M931.5 104V529M963.5 104V529M227 137.5H982M227 197.5H982M227 258.5H982M227 318.5H982M227 378.5H982M227 439.5H982M227 499.5H982" stroke="#71869c" stroke-width="1" stroke-dasharray="3 3" fill="none"/><path d="M227 335.500H982" stroke="#8496a8" stroke-width="1"/><path d="M227 251.500H982M227 275.500H982" stroke="#27c52b" stroke-width="1" stroke-dasharray="9 6 3 6" fill="none"/><path d="M227.5 323V357M229.5 311V330M231.5 299V324M233.5 311V330M235.5 323V330M237.5 311V330M239.5 305V324M241.5 299V300M243.5 311V312M245.5 299V324M247.5 323V330M249.5 311V330M251.5 311V330M253.5 311V330M255.5 323V324M257.5 299V312M259.5 305V324M261.5 305V324M263.5 311V324M265.5 311V324M267.5 305V324M269.5 275V312M271.5 269V288M273.5 263V264M275.5 269V282M277.5 263V282M279.5 263V264M281.5 281V288M283.5 269V282M285.5 251V282M287.5 245V282M289.5 238V264M291.5 251V258M293.5 214V270M295.5 220V239M297.5 214V227M299.5 226V246M301.5 245V258M303.5 238V270M305.5 251V264M307.5 269V288M309.5 281V300M311.5 275V306M313.5 281V312M315.5 281V306M317.5 275V306M319.5 263V288M321.5 281V306M323.5 287V300M325.5 281V288M327.5 281V300M329.5 281V300M331.5 263V282M333.5 263V282M335.5 251V288M337.5 251V270M339.5 214V282M341.5 220V221M343.5 220V239M345.5 220V246M347.5 238V246M349.5 226V246M351.5 226V264M353.5 238V264M355.5 226V270M357.5 238V270M359.5 245V246M361.5 238V264M363.5 245V270M365.5 214V270M367.5 208V239M369.5 196V221M371.5 184V239M373.5 184V221M375.5 184V197M377.5 184V203M379.5 184V221M381.5 190V215M383.5 196V197M385.5 214V221M387.5 184V215M389.5 190V203M391.5 184V197M393.5 184V197M395.5 202V215M397.5 226V227M399.5 184V203M401.5 196V215M403.5 220V227M405.5 196V221M407.5 184V221M409.5 220V221M411.5 208V209M413.5 202V221M415.5 226V239M417.5 220V227M419.5 214V233M421.5 220V239M423.5 220V258M425.5 245V270M427.5 238V270M429.5 251V270M431.5 251V282M433.5 281V288M435.5 275V312M437.5 263V312M439.5 287V300M441.5 281V306M443.5 287V288M445.5 281V300M447.5 287V288M449.5 263V282M451.5 251V300M453.5 226V282M455.5 220V239M457.5 208V215M459.5 202V239M461.5 202V215M463.5 220V221M465.5 202V239M467.5 184V221M469.5 184V215M471.5 184V203M473.5 196V197M475.5 184V197M477.5 184V215M479.5 196V197M481.5 184V221M483.5 214V221M485.5 184V221M487.5 172V197M489.5 190V203M491.5 190V203M493.5 196V221M495.5 184V215M497.5 172V203M499.5 160V179M501.5 160V191M503.5 178V179M505.5 160V191M507.5 160V173M509.5 178V197M511.5 178V179M513.5 160V191M515.5 172V191M517.5 172V197M519.5 184V185M521.5 190V221M523.5 214V246M525.5 220V264M527.5 226V288M529.5 287V330M531.5 299V330M533.5 311V324M535.5 287V324M537.5 311V330M539.5 299V336M541.5 299V336M543.5 299V324M545.5 287V306M547.5 281V306M549.5 281V306M551.5 275V306M553.5 263V282M555.5 251V282M557.5 263V276M559.5 263V288M561.5 251V252M563.5 251V282M565.5 238V270M567.5 220V258M569.5 196V239M571.5 214V239M573.5 238V252M575.5 263V300M577.5 305V324M579.5 287V324M581.5 311V342M583.5 341V415M585.5 402V451M587.5 414V427M589.5 402V433M591.5 390V403M593.5 365V391M595.5 323V379M597.5 335V379M599.5 365V391M601.5 378V379M603.5 378V397M605.5 378V403M607.5 365V397M609.5 378V415M611.5 402V415M613.5 414V439M615.5 414V439M617.5 414V439M619.5 450V481M621.5 492V506M623.5 378V409M625.5 371V397M627.5 353V379M629.5 365V379M631.5 353V366M633.5 353V391M635.5 335V372M637.5 347V366M639.5 347V372M641.5 353V379M643.5 347V366M645.5 335V379M647.5 323V348M649.5 311V330M651.5 323V354M653.5 323V354M655.5 311V330M657.5 329V354M659.5 335V354M661.5 329V372M663.5 329V366M665.5 329V354M667.5 311V330M669.5 311V336M671.5 311V330M673.5 311V330M675.5 317V336M677.5 323V336M679.5 311V336M681.5 323V354M683.5 323V348M685.5 323V336M687.5 311V324M689.5 311V330M691.5 311V324M693.5 311V330M695.5 311V330M697.5 323V324M699.5 311V330M701.5 311V312M703.5 323V336M705.5 323V348M707.5 329V366M709.5 347V366M711.5 347V366M713.5 353V354M715.5 335V354M717.5 329V354M719.5 329V354M721.5 329V330M723.5 311V348M725.5 311V336M727.5 311V324M729.5 275V324M731.5 287V300M733.5 287V300M735.5 287V312M737.5 275V300M739.5 263V300M741.5 269V282M743.5 251V282M745.5 287V300M747.5 287V312M749.5 305V324M751.5 299V330M753.5 299V324M755.5 323V342M757.5 311V324M759.5 311V324M761.5 299V324M763.5 311V312M765.5 269V330M767.5 263V288M769.5 263V282M771.5 263V282M773.5 263V282M775.5 226V264M777.5 220V258M779.5 208V227M781.5 214V246M783.5 238V270M785.5 238V264M787.5 257V276M789.5 263V282M791.5 238V264M793.5 214V246M795.5 214V227M797.5 220V227M799.5 220V239M801.5 238V270M803.5 269V282M805.5 263V282M807.5 281V300M809.5 287V306M811.5 299V330M813.5 275V300M815.5 251V300M817.5 214V270M819.5 214V227M821.5 214V221M823.5 226V239M825.5 214V252M827.5 251V270M829.5 257V270M831.5 263V270M833.5 257V270M835.5 257V270M837.5 263V282M839.5 269V282M841.5 257V282M843.5 263V288M845.5 281V306M847.5 281V312M849.5 281V306M851.5 281V312M853.5 269V312M855.5 305V330M857.5 311V354M859.5 323V354M861.5 311V348M863.5 311V330M865.5 299V324M867.5 287V306M869.5 281V306M871.5 263V300M873.5 263V282M875.5 263V282M877.5 281V324M879.5 311V336M881.5 329V354M883.5 365V366M885.5 347V366M887.5 335V379M889.5 365V391M891.5 371V397M893.5 365V379M895.5 353V372M897.5 365V379M899.5 353V379M901.5 353V391M903.5 365V397M905.5 365V391M907.5 353V391M909.5 353V397M911.5 390V409M913.5 396V421M915.5 408V421M917.5 408V433M919.5 396V397M921.5 390V409M923.5 390V409M925.5 396V409M927.5 390V415M929.5 347V397M931.5 305V354M933.5 287V324M935.5 281V312M937.5 305V330M939.5 311V372M941.5 311V330M943.5 311V336M945.5 323V354M947.5 329V354M949.5 329V348M951.5 323V354M953.5 329V336M955.5 323V354M957.5 347V354M959.5 341V354M961.5 341V366M963.5 341V354M965.5 329V342M967.5 323V348M969.5 311V330M971.5 311V324M973.5 311V324M975.5 323V336M977.5 323V336" stroke="#0fe511" stroke-width="1" fill="none"/><path d="M226.500 104.500H982.500V529.500H226.500z" stroke="#fff" stroke-width="1" fill="none"/><path d="M983 137.5h3M983 197.5h3M983 258.5h3M983 318.5h3M983 378.5h3M983 439.5h3M983 499.5h3M227.5 530v3M291.5 530v3M355.5 530v3M419.5 530v3M483.5 530v3M547.5 530v3M611.5 530v3M675.5 530v3M739.5 530v3M803.5 530v3M867.5 530v3M931.5 530v3" stroke="#fff" stroke-width="1"/><rect x="985" y="329" width="34" height="11" fill="#fff"/></svg>
<span id="t88" class="t th w" style="left:231px;top:108px;letter-spacing:-0.434px;">GBPUSD,M1</span>
<span id="t89" class="t th w" style="left:292px;top:108px;letter-spacing:-0.432px;">1.7732</span>
<span id="t90" class="t th w" style="left:323px;top:108px;letter-spacing:-0.432px;">1.7734</span>
<span id="t91" class="t th w" style="left:354px;top:108px;letter-spacing:-0.432px;">1.7732</span>
<span id="t92" class="t th w" style="left:385px;top:108px;letter-spacing:-0.432px;">1.7732</span>
<span id="t93" class="t th w" style="left:231px;top:241px;letter-spacing:-0.329px;">#2008567 sell</span>
<span id="t94" class="t th w" style="left:231px;top:265px;letter-spacing:-0.329px;">#2008589 sell</span>
<span id="t95" class="t th w" style="left:989px;top:132px;letter-spacing:-0.599px;">1.7765</span>
<span id="t96" class="t th w" style="left:989px;top:192px;letter-spacing:-0.599px;">1.7755</span>
<span id="t97" class="t th w" style="left:989px;top:253px;letter-spacing:-0.599px;">1.7745</span>
<span id="t98" class="t th w" style="left:989px;top:313px;letter-spacing:-0.599px;">1.7735</span>
<span id="t99" class="t th w" style="left:989px;top:373px;letter-spacing:-0.599px;">1.7725</span>
<span id="t100" class="t th w" style="left:989px;top:434px;letter-spacing:-0.599px;">1.7715</span>
<span id="t101" class="t th w" style="left:989px;top:494px;letter-spacing:-0.599px;">1.7705</span>
<span id="t102" class="t th" style="left:988px;top:330px;letter-spacing:-0.599px;">1.7732</span>
<span id="t103" class="t th w" style="left:226px;top:534px;letter-spacing:-0.520px;">26 Sep 2005</span>
<span id="t104" class="t th w" style="left:290px;top:534px;letter-spacing:-0.458px;">26 Sep 06:02</span>
<span id="t105" class="t th w" style="left:354px;top:534px;letter-spacing:-0.458px;">26 Sep 06:38</span>
<span id="t106" class="t th w" style="left:418px;top:534px;letter-spacing:-0.458px;">26 Sep 07:15</span>
<span id="t107" class="t th w" style="left:482px;top:534px;letter-spacing:-0.458px;">26 Sep 07:48</span>
<span id="t108" class="t th w" style="left:546px;top:534px;letter-spacing:-0.458px;">26 Sep 08:22</span>
<span id="t109" class="t th w" style="left:610px;top:534px;letter-spacing:-0.458px;">26 Sep 08:55</span>
<span id="t110" class="t th w" style="left:674px;top:534px;letter-spacing:-0.458px;">26 Sep 09:29</span>
<span id="t111" class="t th w" style="left:738px;top:534px;letter-spacing:-0.458px;">26 Sep 10:09</span>
<span id="t112" class="t th w" style="left:802px;top:534px;letter-spacing:-0.458px;">26 Sep 10:48</span>
<span id="t113" class="t th w" style="left:866px;top:534px;letter-spacing:-0.397px;">26 Sep 11:25</span>
<span id="t114" class="t th w" style="left:930px;top:534px;letter-spacing:-0.397px;">26 Sep 11:57</span>
<div class="a" style="left:224px;top:550px;width:766px;height:18px;overflow:hidden">
<span id="t115" class="t th" style="left:12.5px;top:5px;letter-spacing:-0.144px;color:#858b96">EURUSD,H4</span>
<span id="t116" class="t th" style="left:93px;top:5px;letter-spacing:-0.378px;color:#858b96">GBPUSD,M1</span>
<span id="t117" class="t th" style="left:173px;top:5px;letter-spacing:-0.267px;color:#858b96">EURUSD,M1</span>
<span id="t118" class="t th" style="left:253px;top:5px;letter-spacing:-0.069px;color:#858b96">EURGBP,M5</span>
<span id="t119" class="t th" style="left:334px;top:5px;letter-spacing:-0.366px;color:#858b96">GBPUSD,H1</span>
<span id="t120" class="t th" style="left:411.5px;top:5px;letter-spacing:-0.094px;color:#858b96">EURJPY,M1</span>
<span id="t121" class="t th" style="left:489.5px;top:5px;letter-spacing:-0.255px;color:#858b96">GBPUSD,H4</span>
<span id="t122" class="t th" style="left:568px;top:5px;letter-spacing:-0.097px;color:#858b96">GBPUSD,M30</span>
<span id="t123" class="t th" style="left:654px;top:5px;letter-spacing:-0.255px;color:#858b96">GBPUSD,H4</span>
<span id="t124" class="t th" style="left:734px;top:5px;letter-spacing:-0.311px;color:#858b96">GBPUSD,D1</span>
<div class="a" style="left:82px;top:2px;width:1px;height:13px;background:#8c8c94"></div>
<div class="a" style="left:162px;top:2px;width:1px;height:13px;background:#8c8c94"></div>
<div class="a" style="left:242px;top:2px;width:1px;height:13px;background:#8c8c94"></div>
<div class="a" style="left:322px;top:2px;width:1px;height:13px;background:#8c8c94"></div>
<div class="a" style="left:402px;top:2px;width:1px;height:13px;background:#8c8c94"></div>
<div class="a" style="left:479px;top:2px;width:1px;height:13px;background:#8c8c94"></div>
<div class="a" style="left:558px;top:2px;width:1px;height:13px;background:#8c8c94"></div>
<div class="a" style="left:642px;top:2px;width:1px;height:13px;background:#8c8c94"></div>
<div class="a" style="left:722px;top:2px;width:1px;height:13px;background:#8c8c94"></div>
</div>
<svg style="left:995px;top:554px" width="24" height="9" viewBox="0 0 24 9"><path d="M4 0v8L0 4z" fill="#a8a8b0"/><path d="M18 0v8l4-4z" fill="#000"/></svg>
<svg style="left:4px;top:575px" width="7" height="6" viewBox="0 0 7 6"><path d="M.8.500l5.400 5M6.200.500l-5.400 5" stroke="#000" stroke-width="1.700"/></svg>
<div class="a" style="left:1px;top:587px;width:13px;height:127px;background:#6e9ade"></div>
<span class="t cj w" style="left:3px;top:712px;transform:rotate(-90deg);transform-origin:0 0;font-size:12px">终端</span>
<div class="a" style="left:15px;top:573px;width:1006px;height:1px;background:#a0a0a0"></div>
<div class="a" style="left:15px;top:573px;width:1px;height:120px;background:#a0a0a0"></div>
<div class="a" style="left:16px;top:574px;width:1004px;height:20px;background:linear-gradient(#ebeae7 0,#ebeae7 16px,#dedbd0 17px,#d2cfc4 18px,#c6c3b9 19px)"></div>
<div class="a" style="left:114px;top:577px;width:1px;height:13px;background:#bdbab0"></div>
<div class="a" style="left:115px;top:577px;width:1px;height:13px;background:#fbfbfa"></div>
<div class="a" style="left:284px;top:577px;width:1px;height:13px;background:#bdbab0"></div>
<div class="a" style="left:285px;top:577px;width:1px;height:13px;background:#fbfbfa"></div>
<div class="a" style="left:353px;top:577px;width:1px;height:13px;background:#bdbab0"></div>
<div class="a" style="left:354px;top:577px;width:1px;height:13px;background:#fbfbfa"></div>
<div class="a" style="left:407px;top:577px;width:1px;height:13px;background:#bdbab0"></div>
<div class="a" style="left:408px;top:577px;width:1px;height:13px;background:#fbfbfa"></div>
<div class="a" style="left:475px;top:577px;width:1px;height:13px;background:#bdbab0"></div>
<div class="a" style="left:476px;top:577px;width:1px;height:13px;background:#fbfbfa"></div>
<div class="a" style="left:552px;top:577px;width:1px;height:13px;background:#bdbab0"></div>
<div class="a" style="left:553px;top:577px;width:1px;height:13px;background:#fbfbfa"></div>
<div class="a" style="left:630px;top:577px;width:1px;height:13px;background:#bdbab0"></div>
<div class="a" style="left:631px;top:577px;width:1px;height:13px;background:#fbfbfa"></div>
<div class="a" style="left:707px;top:577px;width:1px;height:13px;background:#bdbab0"></div>
<div class="a" style="left:708px;top:577px;width:1px;height:13px;background:#fbfbfa"></div>
<div class="a" style="left:783px;top:577px;width:1px;height:13px;background:#bdbab0"></div>
<div class="a" style="left:784px;top:577px;width:1px;height:13px;background:#fbfbfa"></div>
<div class="a" style="left:861px;top:577px;width:1px;height:13px;background:#bdbab0"></div>
<div class="a" style="left:862px;top:577px;width:1px;height:13px;background:#fbfbfa"></div>
<div class="a" style="left:938px;top:577px;width:1px;height:13px;background:#bdbab0"></div>
<div class="a" style="left:939px;top:577px;width:1px;height:13px;background:#fbfbfa"></div>
<div class="a" style="left:1017px;top:577px;width:1px;height:13px;background:#bdbab0"></div>
<div class="a" style="left:1018px;top:577px;width:1px;height:13px;background:#fbfbfa"></div>
<span id="t125" class="t cj" style="left:25.5px;top:579px;font-size:11px">定单号</span>
<span id="t126" class="t cj" style="left:257.5px;top:579px;font-size:11px">时间</span>
<span id="t127" class="t cj" style="left:326.5px;top:579px;font-size:11px">类型</span>
<span id="t128" class="t cj" style="left:380.5px;top:579px;font-size:11px">手数</span>
<span id="t129" class="t cj" style="left:449.5px;top:579px;font-size:11px">商品</span>
<span id="t130" class="t cj" style="left:526.5px;top:579px;font-size:11px">价位</span>
<span id="t131" class="t cj" style="left:605.0px;top:579px;font-size:11px">止损</span>
<span id="t132" class="t cj" style="left:681.5px;top:579px;font-size:11px">获利</span>
<span id="t133" class="t cj" style="left:757.5px;top:579px;font-size:11px">价位</span>
<span id="t134" class="t cj" style="left:835.0px;top:579px;font-size:11px">佣金</span>
<span id="t135" class="t cj" style="left:911.5px;top:579px;font-size:11px">利息</span>
<span id="t136" class="t cj" style="left:993.0px;top:579px;font-size:11px">获利</span>
<div class="a" style="left:16px;top:594px;width:1004px;height:98px;background:#fcfdfc"></div>
<div class="a" style="left:16px;top:615px;width:1004px;height:19px;background:#eeeeee"></div>
<div class="a" style="left:16px;top:614px;width:1004px;height:1px;background:#c9c9c9"></div>
<div class="a" style="left:16px;top:634px;width:1004px;height:1px;background:#c9c9c9"></div>
<div class="a" style="left:16px;top:654px;width:1004px;height:1px;background:#c9c9c9"></div>
<div class="a" style="left:114px;top:594px;width:1px;height:61px;background:#c9c9c9"></div>
<div class="a" style="left:284px;top:594px;width:1px;height:61px;background:#c9c9c9"></div>
<div class="a" style="left:353px;top:594px;width:1px;height:61px;background:#c9c9c9"></div>
<div class="a" style="left:407px;top:594px;width:1px;height:61px;background:#c9c9c9"></div>
<div class="a" style="left:475px;top:594px;width:1px;height:61px;background:#c9c9c9"></div>
<div class="a" style="left:552px;top:594px;width:1px;height:61px;background:#c9c9c9"></div>
<div class="a" style="left:630px;top:594px;width:1px;height:61px;background:#c9c9c9"></div>
<div class="a" style="left:707px;top:594px;width:1px;height:61px;background:#c9c9c9"></div>
<div class="a" style="left:783px;top:594px;width:1px;height:61px;background:#c9c9c9"></div>
<div class="a" style="left:861px;top:594px;width:1px;height:61px;background:#c9c9c9"></div>
<div class="a" style="left:938px;top:594px;width:1px;height:61px;background:#c9c9c9"></div>
<svg style="left:19px;top:597px" width="15" height="16" viewBox="0 0 15 16"><path d="M1 .5h8.500l3 3v11h-11.500z" fill="#fdfdfd" stroke="#8c8c8c"/><path d="M9.500.500v3h3" fill="#e4e4e4" stroke="#8c8c8c"/><circle cx="10.500" cy="12" r="3.300" fill="#e84018" stroke="#b02808" stroke-width=".8"/><circle cx="9.700" cy="11" r="1" fill="#f89070"/></svg>
<span id="t137" class="t ss" style="left:41px;top:599px;letter-spacing:-0.603px;">2003203</span>
<span id="t138" class="t ss" style="left:184.5px;top:599px;letter-spacing:-0.602px;">2005.09.23 18:02</span>
<span id="t139" class="t ss" style="left:325px;top:599px;letter-spacing:-0.602px;">sell</span>
<span id="t140" class="t ss" style="left:380px;top:599px;letter-spacing:-0.602px;">8.00</span>
<span id="t141" class="t ss" style="left:437px;top:599px;letter-spacing:-0.602px;">gbpusd</span>
<span id="t142" class="t ss" style="left:513.5px;top:599px;letter-spacing:-0.602px;">1.7779</span>
<span id="t143" class="t ss" style="left:591px;top:599px;letter-spacing:-0.602px;">0.0000</span>
<span id="t144" class="t ss" style="left:667.5px;top:599px;letter-spacing:-0.602px;">0.0000</span>
<span id="t145" class="t ss" style="left:744.5px;top:599px;letter-spacing:-0.602px;">1.7736</span>
<span id="t146" class="t ss" style="left:834px;top:599px;letter-spacing:-0.602px;">0.00</span>
<span id="t147" class="t ss" style="left:898.5px;top:599px;letter-spacing:-0.602px;">-42.00</span>
<span id="t148" class="t ss" style="left:967.5px;top:599px;letter-spacing:-0.602px;">3 440.00</span>
<svg style="left:19px;top:617px" width="15" height="16" viewBox="0 0 15 16"><path d="M1 .5h8.500l3 3v11h-11.500z" fill="#fdfdfd" stroke="#8c8c8c"/><path d="M9.500.500v3h3" fill="#e4e4e4" stroke="#8c8c8c"/><circle cx="10.500" cy="12" r="3.300" fill="#e84018" stroke="#b02808" stroke-width=".8"/><circle cx="9.700" cy="11" r="1" fill="#f89070"/></svg>
<span id="t149" class="t ss" style="left:41px;top:619px;letter-spacing:-0.603px;">2008567</span>
<span id="t150" class="t ss" style="left:184.5px;top:619px;letter-spacing:-0.602px;">2005.09.26 06:09</span>
<span id="t151" class="t ss" style="left:325px;top:619px;letter-spacing:-0.602px;">sell</span>
<span id="t152" class="t ss" style="left:380px;top:619px;letter-spacing:-0.602px;">8.00</span>
<span id="t153" class="t ss" style="left:437px;top:619px;letter-spacing:-0.602px;">gbpusd</span>
<span id="t154" class="t ss" style="left:513.5px;top:619px;letter-spacing:-0.602px;">1.7746</span>
<span id="t155" class="t ss" style="left:591px;top:619px;letter-spacing:-0.602px;">0.0000</span>
<span id="t156" class="t ss" style="left:667.5px;top:619px;letter-spacing:-0.602px;">0.0000</span>
<span id="t157" class="t ss" style="left:744.5px;top:619px;letter-spacing:-0.602px;">1.7736</span>
<span id="t158" class="t ss" style="left:834px;top:619px;letter-spacing:-0.602px;">0.00</span>
<span id="t159" class="t ss" style="left:910.5px;top:619px;letter-spacing:-0.602px;">0.00</span>
<span id="t160" class="t ss" style="left:979.5px;top:619px;letter-spacing:-0.602px;">800.00</span>
<svg style="left:19px;top:637px" width="15" height="16" viewBox="0 0 15 16"><path d="M1 .5h8.500l3 3v11h-11.500z" fill="#fdfdfd" stroke="#8c8c8c"/><path d="M9.500.500v3h3" fill="#e4e4e4" stroke="#8c8c8c"/><circle cx="10.500" cy="12" r="3.300" fill="#e84018" stroke="#b02808" stroke-width=".8"/><circle cx="9.700" cy="11" r="1" fill="#f89070"/></svg>
<span id="t161" class="t ss" style="left:41px;top:639px;letter-spacing:-0.603px;">2008589</span>
<span id="t162" class="t ss" style="left:184.5px;top:639px;letter-spacing:-0.602px;">2005.09.26 06:13</span>
<span id="t163" class="t ss" style="left:325px;top:639px;letter-spacing:-0.602px;">sell</span>
<span id="t164" class="t ss" style="left:380px;top:639px;letter-spacing:-0.602px;">8.00</span>
<span id="t165" class="t ss" style="left:437px;top:639px;letter-spacing:-0.602px;">gbpusd</span>
<span id="t166" class="t ss" style="left:513.5px;top:639px;letter-spacing:-0.602px;">1.7742</span>
<span id="t167" class="t ss" style="left:591px;top:639px;letter-spacing:-0.602px;">0.0000</span>
<span id="t168" class="t ss" style="left:667.5px;top:639px;letter-spacing:-0.602px;">0.0000</span>
<span id="t169" class="t ss" style="left:744.5px;top:639px;letter-spacing:-0.602px;">1.7736</span>
<span id="t170" class="t ss" style="left:834px;top:639px;letter-spacing:-0.602px;">0.00</span>
<span id="t171" class="t ss" style="left:910.5px;top:639px;letter-spacing:-0.602px;">0.00</span>
<span id="t172" class="t ss" style="left:979.5px;top:639px;letter-spacing:-0.602px;">480.00</span>
<div class="a" style="left:16px;top:655px;width:1004px;height:19px;background:#c8c8c8"></div>
<div class="a" style="left:19px;top:657px;width:13px;height:14px;background:#fdfdfd;border:1px solid #8c8c8c"></div>
<svg style="left:21px;top:659px" width="9" height="10" viewBox="0 0 9 10"><path d="M4.500.500l4 4.500h-2.300v4h-3.400v-4h-2.300z" fill="#2cc02c" stroke="#0c7a14" stroke-width=".8"/></svg>
<span id="t173" class="t sb" style="left:41px;top:659px;letter-spacing:1.464px;">余额:</span>
<span id="t174" class="t sb" style="left:79px;top:659px;letter-spacing:0.398px;">48 160.00</span>
<span id="t175" class="t sb" style="left:157px;top:659px;letter-spacing:1.464px;">净值:</span>
<span id="t176" class="t sb" style="left:195px;top:659px;letter-spacing:0.286px;">52 838.00</span>
<span id="t177" class="t sb" style="left:272px;top:659px;letter-spacing:0.398px;">已用保证金:</span>
<span id="t178" class="t sb" style="left:341px;top:659px;letter-spacing:0.398px;">21 306.80</span>
<span id="t179" class="t sb" style="left:422px;top:659px;letter-spacing:0.398px;">可用保证金:</span>
<span id="t180" class="t sb" style="left:497px;top:659px;letter-spacing:0.398px;">31 531.20</span>
<span id="t181" class="t sb" style="left:574px;top:659px;letter-spacing:0.232px;">保证金比例:</span>
<span id="t182" class="t sb" style="left:648px;top:659px;letter-spacing:0.112px;">247.99%</span>
<span id="t183" class="t sb" style="left:960px;top:659px;letter-spacing:0.273px;">4 678.00</span>
<div class="a" style="left:15px;top:692px;width:1006px;height:1px;background:#000"></div>
<div class="a" style="left:18px;top:692px;width:44px;height:18px;background:#fcfcfa;border:1px solid #000;border-top:0;box-shadow:1px 1px 0 #000"></div>
<span id="t184" class="t cj" style="left:27px;top:696px;">交易</span>
<span id="t185" class="t cj" style="left:71.5px;top:696px;color:#8c8c8c">账户历史</span>
<span id="t186" class="t cj" style="left:139.5px;top:696px;color:#8c8c8c">新闻</span>
<span id="t187" class="t cj" style="left:183.5px;top:696px;color:#8c8c8c">警报</span>
<span id="t188" class="t cj" style="left:227.5px;top:696px;color:#8c8c8c">邮箱</span>
<span id="t189" class="t cj" style="left:271.5px;top:696px;color:#8c8c8c">智能交易系统</span>
<span id="t190" class="t cj" style="left:364.5px;top:696px;color:#8c8c8c">日志</span>
<div class="a" style="left:130px;top:696px;width:1px;height:12px;background:#858585"></div>
<div class="a" style="left:174px;top:696px;width:1px;height:12px;background:#858585"></div>
<div class="a" style="left:218px;top:696px;width:1px;height:12px;background:#858585"></div>
<div class="a" style="left:262px;top:696px;width:1px;height:12px;background:#858585"></div>
<div class="a" style="left:354px;top:696px;width:1px;height:12px;background:#858585"></div>
<div class="a" style="left:398px;top:696px;width:1px;height:12px;background:#858585"></div>
<div class="a" style="left:0px;top:715px;width:1024px;height:1px;background:#c4c4c0"></div>
<div class="a" style="left:0px;top:716px;width:1024px;height:1px;background:#fbfbfa"></div>
<div class="a" style="left:0px;top:718px;width:1024px;height:1px;background:#c8c8c4"></div>
<div class="a" style="left:168px;top:721px;width:1px;height:15px;background:#b0b0ac"></div>
<div class="a" style="left:169px;top:721px;width:1px;height:15px;background:#fbfbfa"></div>
<div class="a" style="left:332px;top:721px;width:1px;height:15px;background:#b0b0ac"></div>
<div class="a" style="left:333px;top:721px;width:1px;height:15px;background:#fbfbfa"></div>
<div class="a" style="left:448px;top:721px;width:1px;height:15px;background:#b0b0ac"></div>
<div class="a" style="left:449px;top:721px;width:1px;height:15px;background:#fbfbfa"></div>
<div class="a" style="left:534px;top:721px;width:1px;height:15px;background:#b0b0ac"></div>
<div class="a" style="left:535px;top:721px;width:1px;height:15px;background:#fbfbfa"></div>
<div class="a" style="left:620px;top:721px;width:1px;height:15px;background:#b0b0ac"></div>
<div class="a" style="left:621px;top:721px;width:1px;height:15px;background:#fbfbfa"></div>
<div class="a" style="left:706px;top:721px;width:1px;height:15px;background:#b0b0ac"></div>
<div class="a" style="left:707px;top:721px;width:1px;height:15px;background:#fbfbfa"></div>
<div class="a" style="left:792px;top:721px;width:1px;height:15px;background:#b0b0ac"></div>
<div class="a" style="left:793px;top:721px;width:1px;height:15px;background:#fbfbfa"></div>
<div class="a" style="left:877px;top:721px;width:1px;height:15px;background:#b0b0ac"></div>
<div class="a" style="left:878px;top:721px;width:1px;height:15px;background:#fbfbfa"></div>
<span id="t191" class="t sb" style="left:4px;top:724px;letter-spacing:-0.481px;">寻求帮助,请按F1键</span>
<span id="t192" class="t sb" style="left:174px;top:724px;letter-spacing:-0.746px;">Default</span>
<svg style="left:884px;top:722px" width="24" height="13" viewBox="0 0 24 13"><rect x="0" y="0" width="2" height="6.0" fill="#6c8420"/><rect x="0" y="10.0" width="2" height="2.0" fill="#a01818"/><rect x="3" y="0" width="2" height="5.4" fill="#6c8420"/><rect x="3" y="8.7" width="2" height="3.3" fill="#a01818"/><rect x="6" y="0" width="2" height="4.8" fill="#6c8420"/><rect x="6" y="7.4" width="2" height="4.6" fill="#a01818"/><rect x="9" y="0" width="2" height="4.2" fill="#6c8420"/><rect x="9" y="6.1" width="2" height="5.9" fill="#a01818"/><rect x="12" y="0" width="2" height="3.6" fill="#6c8420"/><rect x="12" y="4.8" width="2" height="7.2" fill="#a01818"/><rect x="15" y="0" width="2" height="3.0" fill="#6c8420"/><rect x="15" y="3.5" width="2" height="8.5" fill="#a01818"/><rect x="18" y="0" width="2" height="2.4" fill="#6c8420"/><rect x="18" y="2.2" width="2" height="9.8" fill="#a01818"/><rect x="21" y="0" width="2" height="1.8" fill="#6c8420"/><rect x="21" y="0.9" width="2" height="11.1" fill="#a01818"/></svg>
<span id="t193" class="t sb" style="left:925px;top:724px;letter-spacing:-0.852px;">296/5 kb</span>
<svg style="left:1008px;top:722px" width="16" height="16" viewBox="0 0 16 16"><path d="M15 3L3 15M15 7L7 15M15 11l-4 4" stroke="#b4b4b0" stroke-width="1.500"/><path d="M16 4L4 16M16 8l-8 8M16 12l-4 4" stroke="#fbfbfa" stroke-width="1"/></svg>
<div class="a" style="left:0px;top:738px;width:1024px;height:30px;background:linear-gradient(#2a66de 0,#3f87f4 2px,#2d6ee6 4px,#2761dc 8px,#265fd9 22px,#2358d0 27px,#1c48b4 30px)"></div>
<div class="a" style="left:770px;top:738px;width:254px;height:30px;background:linear-gradient(#1282dc 0,#22a4f6 2px,#199df0 5px,#1797ec 20px,#1286da 28px,#0c6cc0 30px);border-left:1px solid #0a50a8"></div>
<div class="a" style="left:0px;top:738px;width:99px;height:30px;background:linear-gradient(#2f8a2f 0,#58b058 3px,#3f9c3f 7px,#379437 20px,#2f862f 27px,#266f26 30px);border-radius:0 12px 14px 0/0 15px 15px 0;box-shadow:1px 0 2px #1a3c90"></div>
<svg style="left:10px;top:743px" width="22" height="20" viewBox="0 0 22 20"><path d="M2 3q4-2 8 0l-1.500 7q-4-2-8 0z" fill="#e8582c"/><path d="M11 3.500q4 2 8 0l-1.500 7q-4 2-8 0z" fill="#6cc040"/><path d="M.5 11q4-2 8 0l-1.500 7q-4-2-8 0z" transform="translate(.5,0)" fill="#3878e0"/><path d="M9.500 11.500q4 2 8 0l-1.500 7q-4 2-8 0z" fill="#f8c82c"/></svg>
<span id="t194" class="t w" style="left:38px;top:744px;letter-spacing:1.000px;font:italic 300 18px/1 'Liberation Sans','Noto Sans CJK SC',sans-serif;text-shadow:1px 1px 1px #1c501c">开始</span>
<svg style="left:111px;top:745px" width="16" height="16" viewBox="0 0 16 16"><rect width="16" height="16" fill="#0a1880"/><path d="M3 4h3v3H3zM10 2h3v3h-3zM3 11h3v3H3zM10 10h3v3h-3z" fill="#18e0e8"/><path d="M6 5l4-1M5 7v4M6 12l4-1" stroke="#fff"/></svg>
<svg style="left:134px;top:745px" width="16" height="16" viewBox="0 0 16 16"><rect width="16" height="16" rx="2" fill="#303030" stroke="#888"/><path d="M8 2.500q4 2 3 6l-3 5-3-5q-1-4 3-6z" fill="#e8e8e8"/></svg>
<svg style="left:157px;top:745px" width="18" height="16" viewBox="0 0 18 16"><path d="M4.500 2l3.500 3.500-3.500 3.500-3.500-3.500zM12.500 2l3.500 3.500-3.500 3.500-3.500-3.500zM8.500 6l3.500 3.500-3.500 3.500-3.500-3.500z" fill="#e02020" stroke="#801010" stroke-width=".6"/></svg>
<span id="t195" class="t " style="left:185px;top:739px;font:14px/1 'Liberation Sans',sans-serif;color:#b8d4fa">»</span>
<div class="a" style="left:201px;top:741px;width:66px;height:23px;background:linear-gradient(#4b8ef8 0,#3f84f4 3px,#3a7eee 18px,#3474e4 23px);border-radius:3px;box-shadow:inset 1px 1px 0 #6aa4fb,inset -1px -1px 0 #2a5ec8"></div>
<svg style="left:210px;top:745px" width="16" height="16" viewBox="0 0 16 16"><path d="M0 5l5 2 3-3 6 1v7H0z" fill="#2030c0"/><path d="M0 12l5-4 3 2 7-7" stroke="#e02020" stroke-width="1.400" fill="none"/></svg>
<span id="t196" class="t w" style="left:230px;top:747px;font:11px/1 'Liberation Sans','Noto Sans CJK SC',sans-serif">A...</span>
<div class="a" style="left:269px;top:741px;width:66px;height:23px;background:linear-gradient(#4b8ef8 0,#3f84f4 3px,#3a7eee 18px,#3474e4 23px);border-radius:3px;box-shadow:inset 1px 1px 0 #6aa4fb,inset -1px -1px 0 #2a5ec8"></div>
<svg style="left:278px;top:745px" width="16" height="16" viewBox="0 0 16 16"><rect x="5" y="1" width="10" height="12" fill="#e8d860" stroke="#504000"/><path d="M7 4h6M7 7h6M7 10h6" stroke="#504000"/><circle cx="4.500" cy="5" r="4" fill="#30a050" stroke="#1048a0"/><path d="M1 15h13" stroke="#f0e020" stroke-width="2"/></svg>
<span id="t197" class="t w" style="left:298px;top:747px;font:11px/1 'Liberation Sans','Noto Sans CJK SC',sans-serif">Gl...</span>
<div class="a" style="left:337px;top:741px;width:66px;height:23px;background:linear-gradient(#4b8ef8 0,#3f84f4 3px,#3a7eee 18px,#3474e4 23px);border-radius:3px;box-shadow:inset 1px 1px 0 #6aa4fb,inset -1px -1px 0 #2a5ec8"></div>
<svg style="left:346px;top:745px" width="16" height="16" viewBox="0 0 16 16"><path d="M4 2l3 3-3 3-3-3zM11 2l3 3-3 3-3-3zM7.500 6l3 3-3 3-3-3z" fill="#e02020" stroke="#801010" stroke-width=".6"/></svg>
<span id="t198" class="t w" style="left:366px;top:747px;font:11px/1 'Liberation Sans','Noto Sans CJK SC',sans-serif">CJ...</span>
<div class="a" style="left:405px;top:741px;width:66px;height:23px;background:linear-gradient(#4b8ef8 0,#3f84f4 3px,#3a7eee 18px,#3474e4 23px);border-radius:3px;box-shadow:inset 1px 1px 0 #6aa4fb,inset -1px -1px 0 #2a5ec8"></div>
<svg style="left:414px;top:745px" width="16" height="16" viewBox="0 0 16 16"><rect x=".5" y="1.500" width="10" height="8" fill="#e8f0ff" stroke="#3c6cc8"/><rect x="4.500" y="5.500" width="11" height="9" fill="#fff" stroke="#3c6cc8"/><rect x="4.500" y="5.500" width="11" height="2.500" fill="#4a80e0"/><path d="M6.500 11l2 2 2-3 2 3 2-2" fill="none" stroke="#3060b0"/></svg>
<span id="t199" class="t w" style="left:434px;top:747px;font:11px/1 'Liberation Sans','Noto Sans CJK SC',sans-serif">15...</span>
<div class="a" style="left:473px;top:741px;width:66px;height:23px;background:linear-gradient(#4b8ef8 0,#3f84f4 3px,#3a7eee 18px,#3474e4 23px);border-radius:3px;box-shadow:inset 1px 1px 0 #6aa4fb,inset -1px -1px 0 #2a5ec8"></div>
<svg style="left:482px;top:745px" width="16" height="16" viewBox="0 0 16 16"><path d="M5 1h8l2 2v12H5z" fill="#f4f4f4" stroke="#707070"/><circle cx="6" cy="8" r="4.500" fill="none" stroke="#2a7ae0" stroke-width="2"/><path d="M1 9l11-4" stroke="#f0b020" stroke-width="1.500"/></svg>
<span id="t200" class="t w" style="left:502px;top:747px;font:11px/1 'Liberation Sans','Noto Sans CJK SC',sans-serif">外...</span>
<div class="a" style="left:541px;top:741px;width:66px;height:23px;background:linear-gradient(#4b8ef8 0,#3f84f4 3px,#3a7eee 18px,#3474e4 23px);border-radius:3px;box-shadow:inset 1px 1px 0 #6aa4fb,inset -1px -1px 0 #2a5ec8"></div>
<svg style="left:550px;top:745px" width="16" height="16" viewBox="0 0 16 16"><rect width="16" height="16" fill="#181818"/><path d="M2 12V6M4 13V4M6 11V7M8 12V3M10 10V5M12 12V6M14 9V2" stroke="#e83030" stroke-width="1.500"/><path d="M1 12l4-3 3 2 7-7" stroke="#30d8e8" fill="none"/><path d="M1 9l5 1 4-4 5 2" stroke="#e8e020" fill="none"/></svg>
<span id="t201" class="t w" style="left:570px;top:747px;font:11px/1 'Liberation Sans','Noto Sans CJK SC',sans-serif">文...</span>
<svg style="left:621px;top:746px" width="17" height="14" viewBox="0 0 17 14"><rect x=".5" y="3.500" width="16" height="10" rx="1.500" fill="#f4f4f4" stroke="#222"/><path d="M2.500 6h12M2.500 8h12M4 11h9" stroke="#222" stroke-dasharray="1 1"/><path d="M4 3q2-3 4 0t4-1" stroke="#fff" fill="none"/></svg>
<svg style="left:644px;top:745px" width="15" height="16" viewBox="0 0 15 16"><path d="M.5.500h14v12h-6l-3 3v-3h-5z" fill="#f8f0a0" stroke="#111"/><text x="4" y="11" font-family="Liberation Sans,sans-serif" font-weight="bold" font-size="11" fill="#102080">?</text></svg>
<svg style="left:669px;top:743px" width="10" height="18" viewBox="0 0 10 18"><rect x="3.500" y=".5" width="6" height="4" fill="none" stroke="#fff" stroke-width="1.200"/><rect x=".5" y="3.500" width="6" height="4" fill="#245edc" stroke="#fff" stroke-width="1.200"/><path d="M1.500 14h5l-2.500 3z" fill="#fff"/></svg>
<span id="t202" class="t " style="left:691px;top:746px;letter-spacing:-0.004px;font:12px/1 'Liberation Sans','Noto Sans CJK SC',sans-serif;color:#94baf3">我的电脑</span>
<span id="t203" class="t " style="left:746px;top:739px;font:14px/1 'Liberation Sans',sans-serif;color:#b8d4fa">»</span>
<svg style="left:760px;top:743px" width="20" height="20" viewBox="0 0 20 20"><circle cx="10" cy="10" r="9" fill="#2b7ce8" stroke="#6fa8ee" stroke-width="1"/><path d="M3 8a7.500 7.500 0 0 1 12-4.500" stroke="#58a8f8" stroke-width="2" fill="none" opacity=".6"/><path d="M12 5.500l-4.500 4.500 4.500 4.500" stroke="#fff" stroke-width="2.200" fill="none"/></svg>
<svg style="left:781px;top:745px" width="17" height="16" viewBox="0 0 17 16"><path d="M8 0v16M0 8h16M2 2l12 12M14 2L2 14" stroke="#f8e820" stroke-width="2"/><rect x="1" y="6" width="7" height="5" fill="#111"/><circle cx="10" cy="8" r="3" fill="#f8e820"/></svg>
<svg style="left:799px;top:745px" width="15" height="16" viewBox="0 0 15 16"><rect x=".5" y=".5" width="14" height="14" fill="#f020d0" stroke="#200020"/><rect x="2.500" y="2.500" width="10" height="10" fill="#fff"/><text x="4.500" y="12" font-family="Liberation Sans,sans-serif" font-weight="bold" font-size="11" fill="#a000a0">?</text></svg>
<svg style="left:816px;top:746px" width="13" height="14" viewBox="0 0 13 14"><path d="M1 4.500h3l5-4v13l-5-4h-3z" fill="#e8e8e8" stroke="#888"/><path d="M11 4q1.500 3 0 6" stroke="#d8e8ff" fill="none"/></svg>
<svg style="left:832px;top:745px" width="16" height="16" viewBox="0 0 16 16"><rect x="6.500" y=".5" width="9" height="7" fill="#b8d8f8" stroke="#4878b8"/><rect x=".5" y="4.500" width="9" height="7" fill="#a8ccf4" stroke="#4878b8"/><path d="M2 14h6M9 10.500h5" stroke="#e0e0e0" stroke-width="2"/></svg>
<svg style="left:854px;top:746px" width="13" height="14" viewBox="0 0 13 14"><rect x=".5" y=".5" width="12" height="13" fill="#101010" stroke="#d8d8d8"/><rect x="1" y="8" width="11" height="5" fill="#20f020"/><path d="M3 1v7M5 1v7M7 1v7M9 1v7M11 1v7M1 3h11M1 5h11" stroke="#107010" stroke-width=".5"/></svg>
<svg style="left:871px;top:745px" width="15" height="16" viewBox="0 0 15 16"><path d="M7.500 0l7 6.500h-14z" fill="#30c030" stroke="#107010" stroke-width=".6"/><path d="M7.500 16l7-6.500h-14z" fill="#30c030" stroke="#107010" stroke-width=".6"/></svg>
<svg style="left:889px;top:746px" width="14" height="14" viewBox="0 0 14 14"><rect x=".5" y=".5" width="13" height="13" fill="#101010" stroke="#d8d8d8"/><rect x="1" y="8" width="12" height="5" fill="#f8e820"/><path d="M3 1v7M5 1v7M7 1v7M9 1v7M11 1v7M1 3h12M1 5h12" stroke="#807010" stroke-width=".5"/><rect x="1" y="1" width="12" height="7" fill="#f8e820" opacity=".45"/></svg>
<svg style="left:906px;top:745px" width="17" height="16" viewBox="0 0 17 16"><path d="M8.500 1v13M4 15h9M2 4h13" stroke="#000" stroke-width="1.600"/><path d="M0 10l2.500-6 2.500 6zM12 10l2.500-6 2.500 6z" fill="none" stroke="#000"/><path d="M0 10h5q-2.500 3-5 0z" fill="#e02020"/><path d="M12 10h5q-2.500 3-5 0z" fill="#2040e0"/></svg>
<svg style="left:924px;top:745px" width="16" height="16" viewBox="0 0 16 16"><rect x="6.500" y=".5" width="9" height="7" fill="#b8d8f8" stroke="#4878b8"/><rect x=".5" y="4.500" width="9" height="7" fill="#a8ccf4" stroke="#4878b8"/><path d="M2 14h6M9 10.500h5" stroke="#e0e0e0" stroke-width="2"/></svg>
<svg style="left:942px;top:745px" width="16" height="16" viewBox="0 0 16 16"><circle cx="8" cy="8" r="7.500" fill="#2850c8"/><path d="M8 8L1 5q3-5 8-4.500z" fill="#e87020"/><path d="M8 8l7.500-1q0 6-5 8z" fill="#20a040"/><path d="M8 8l-5 6q-3-3-2-8z" fill="#d83020"/></svg>
<svg style="left:960px;top:745px" width="17" height="16" viewBox="0 0 17 16"><circle cx="8.500" cy="8" r="7.500" fill="#183060" stroke="#000"/><path d="M2 11q6.500-12 13 0z" fill="#80a0c0" opacity=".6"/><circle cx="8.500" cy="7" r="2.500" fill="#e82060"/><path d="M1 12h6v3H1zM8 11l6 0 0 3-3 0" fill="#e8e020"/><path d="M9 14h7" stroke="#20c030" stroke-width="2"/></svg>
<span id="t204" class="t w" style="left:984px;top:748px;letter-spacing:-0.106px;font:11px/1 'Liberation Sans',sans-serif">18:23</span>
</body></html>
